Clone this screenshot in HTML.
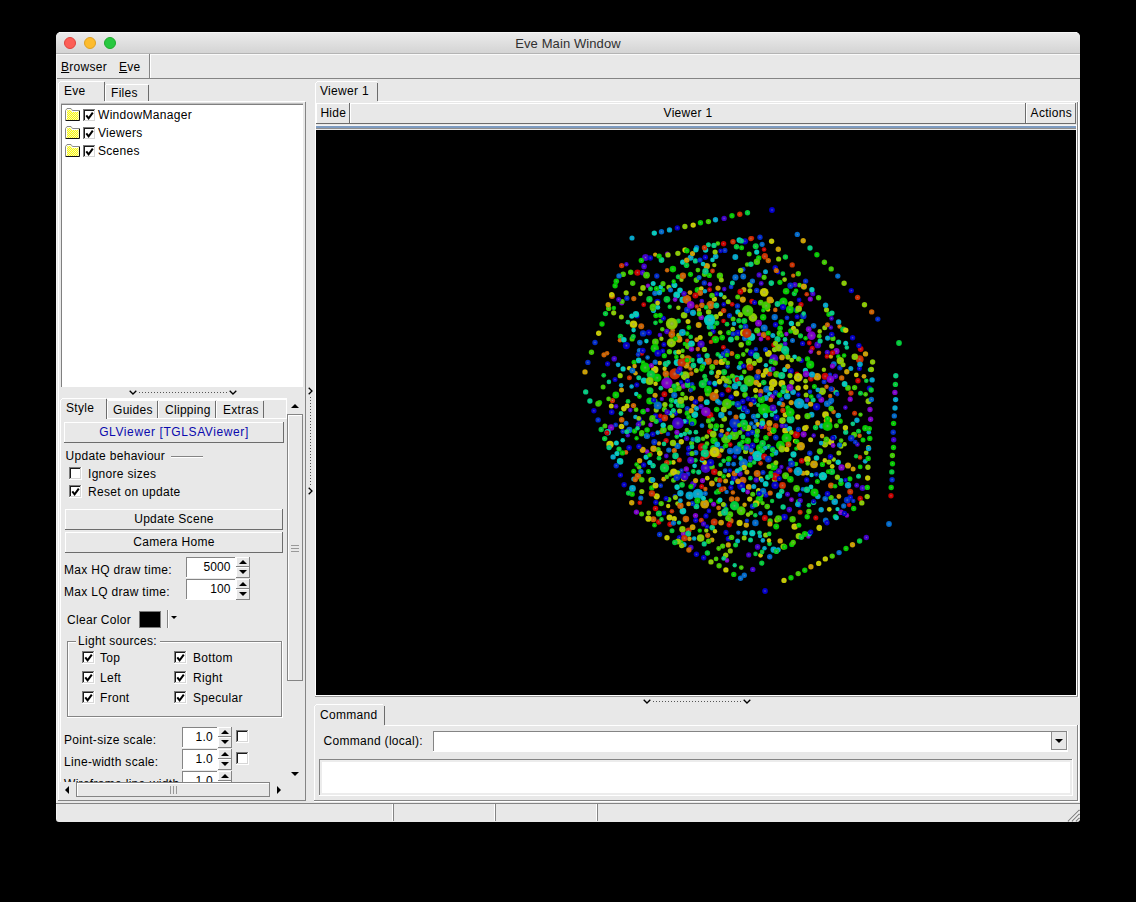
<!DOCTYPE html>
<html><head><meta charset="utf-8"><title>Eve Main Window</title>
<style>
html,body{margin:0;padding:0;background:#000;}
body{width:1136px;height:902px;position:relative;overflow:hidden;font-family:"Liberation Sans",sans-serif;font-size:12px;letter-spacing:0.3px;}
body div, body svg{position:absolute;}
u{text-decoration:underline;text-underline-offset:1px;}
</style></head><body>
<svg width="0" height="0" style="left:0;top:0"><defs><pattern id="dth" width="2" height="2" patternUnits="userSpaceOnUse"><rect width="2" height="2" fill="#f4f4c0"/><rect width="1" height="1" fill="#ffff00"/><rect x="1" y="1" width="1" height="1" fill="#ffff00"/></pattern></defs></svg>
<div style="left:56px;top:32px;width:1024px;height:790px;background:#e8e8e8;border-radius:5px 5px 3px 3px"></div>
<div style="left:56px;top:32px;width:1024px;height:22px;background:linear-gradient(#ececec,#d4d4d4);border-radius:5px 5px 0 0;border-bottom:1px solid #b4b4b4;box-sizing:border-box"></div>
<div style="left:59px;top:32px;width:1018px;height:1px;background:#f6f6f6"></div>
<div style="left:64px;top:37px;width:12px;height:12px;background:#fc5f57;border-radius:50%;border:0.5px solid #e0443e;box-sizing:border-box"></div>
<div style="left:84px;top:37px;width:12px;height:12px;background:#fdbc2e;border-radius:50%;border:0.5px solid #dea123;box-sizing:border-box"></div>
<div style="left:104px;top:37px;width:12px;height:12px;background:#28c840;border-radius:50%;border:0.5px solid #1eab2b;box-sizing:border-box"></div>
<div style="left:56px;top:36px;font-size:13px;line-height:15px;color:#303030;white-space:nowrap;letter-spacing:0.1px;width:1024px;text-align:center;">Eve Main Window</div>
<div style="left:61px;top:60px;font-size:12px;line-height:14px;color:#000;white-space:nowrap;"><u>B</u>rowser</div>
<div style="left:119px;top:60px;font-size:12px;line-height:14px;color:#000;white-space:nowrap;"><u>E</u>ve</div>
<div style="left:56px;top:54px;width:1024px;height:1px;background:#fafafa"></div>
<div style="left:149px;top:54px;width:1px;height:24px;background:#848484"></div>
<div style="left:150px;top:54px;width:1px;height:24px;background:#ffffff"></div>
<div style="left:56px;top:78px;width:1024px;height:1px;background:#848484"></div>
<div style="left:58px;top:83px;width:1px;height:718px;background:#ffffff"></div>
<div style="left:305px;top:102px;width:1px;height:699px;background:#848484"></div>
<div style="left:58px;top:800px;width:248px;height:1px;background:#848484"></div>
<div style="left:60px;top:81px;width:44px;height:1px;background:#ffffff"></div>
<div style="left:59px;top:82px;width:1px;height:1px;background:#fff"></div>
<div style="left:104px;top:82px;width:1px;height:19px;background:#6c6c6c"></div>
<div style="left:106px;top:84px;width:42px;height:1px;background:#ffffff"></div>
<div style="left:105px;top:85px;width:1px;height:16px;background:#ffffff"></div>
<div style="left:148px;top:85px;width:1px;height:16px;background:#6c6c6c"></div>
<div style="left:105px;top:101px;width:200px;height:1px;background:#ffffff"></div>
<div style="left:64px;top:84px;font-size:12px;line-height:14px;color:#000;white-space:nowrap;">Eve</div>
<div style="left:111px;top:86px;font-size:12px;line-height:14px;color:#000;white-space:nowrap;">Files</div>
<div style="left:61px;top:103px;width:242px;height:284px;background:#fff"></div>
<div style="left:61px;top:103px;width:242px;height:1px;background:#c0c0c0"></div>
<div style="left:61px;top:104px;width:242px;height:1px;background:#808080"></div>
<div style="left:61px;top:104px;width:1px;height:283px;background:#808080"></div>
<svg style="left:65px;top:108px" width="16" height="14" viewBox="0 0 16 14">
<path d="M1 12 V2.5 L2 1 H6 L7.5 3 H13.5 V12 Z" fill="url(#dth)"/>
<path d="M0.5 12 V2.5 L2 0.5 H6 L7.5 2.5 H14" stroke="#8a8a8a" stroke-width="1" fill="none"/>
<path d="M1.5 11.5 V3 L2.5 1.5 H5.6 L7 3.5 H13.4" stroke="#fff" stroke-width="1" fill="none"/>
<path d="M0.5 12.5 H14.5 V2.5" stroke="#111" stroke-width="1" fill="none"/>
</svg>
<div style="left:83px;top:109px;width:13px;height:13px;background:#fff"></div>
<div style="left:83px;top:109px;width:13px;height:1px;background:#7a7a7a"></div>
<div style="left:83px;top:109px;width:1px;height:13px;background:#7a7a7a"></div>
<div style="left:84px;top:110px;width:11px;height:1px;background:#1a1a1a"></div>
<div style="left:84px;top:110px;width:1px;height:11px;background:#1a1a1a"></div>
<div style="left:84px;top:120px;width:11px;height:1px;background:#d6d6d6"></div>
<div style="left:94px;top:110px;width:1px;height:11px;background:#d6d6d6"></div>
<div style="left:83px;top:121px;width:13px;height:1px;background:#fff"></div>
<div style="left:95px;top:109px;width:1px;height:13px;background:#fff"></div>
<svg style="left:83px;top:109px" width="12" height="12"><path d="M3.3 6.3 L5.6 9.3 L9.8 3.6" stroke="#000" stroke-width="2" fill="none"/></svg>
<div style="left:98px;top:108px;font-size:12px;line-height:14px;color:#000;white-space:nowrap;">WindowManager</div>
<svg style="left:65px;top:126px" width="16" height="14" viewBox="0 0 16 14">
<path d="M1 12 V2.5 L2 1 H6 L7.5 3 H13.5 V12 Z" fill="url(#dth)"/>
<path d="M0.5 12 V2.5 L2 0.5 H6 L7.5 2.5 H14" stroke="#8a8a8a" stroke-width="1" fill="none"/>
<path d="M1.5 11.5 V3 L2.5 1.5 H5.6 L7 3.5 H13.4" stroke="#fff" stroke-width="1" fill="none"/>
<path d="M0.5 12.5 H14.5 V2.5" stroke="#111" stroke-width="1" fill="none"/>
</svg>
<div style="left:83px;top:127px;width:13px;height:13px;background:#fff"></div>
<div style="left:83px;top:127px;width:13px;height:1px;background:#7a7a7a"></div>
<div style="left:83px;top:127px;width:1px;height:13px;background:#7a7a7a"></div>
<div style="left:84px;top:128px;width:11px;height:1px;background:#1a1a1a"></div>
<div style="left:84px;top:128px;width:1px;height:11px;background:#1a1a1a"></div>
<div style="left:84px;top:138px;width:11px;height:1px;background:#d6d6d6"></div>
<div style="left:94px;top:128px;width:1px;height:11px;background:#d6d6d6"></div>
<div style="left:83px;top:139px;width:13px;height:1px;background:#fff"></div>
<div style="left:95px;top:127px;width:1px;height:13px;background:#fff"></div>
<svg style="left:83px;top:127px" width="12" height="12"><path d="M3.3 6.3 L5.6 9.3 L9.8 3.6" stroke="#000" stroke-width="2" fill="none"/></svg>
<div style="left:98px;top:126px;font-size:12px;line-height:14px;color:#000;white-space:nowrap;">Viewers</div>
<svg style="left:65px;top:144px" width="16" height="14" viewBox="0 0 16 14">
<path d="M1 12 V2.5 L2 1 H6 L7.5 3 H13.5 V12 Z" fill="url(#dth)"/>
<path d="M0.5 12 V2.5 L2 0.5 H6 L7.5 2.5 H14" stroke="#8a8a8a" stroke-width="1" fill="none"/>
<path d="M1.5 11.5 V3 L2.5 1.5 H5.6 L7 3.5 H13.4" stroke="#fff" stroke-width="1" fill="none"/>
<path d="M0.5 12.5 H14.5 V2.5" stroke="#111" stroke-width="1" fill="none"/>
</svg>
<div style="left:83px;top:145px;width:13px;height:13px;background:#fff"></div>
<div style="left:83px;top:145px;width:13px;height:1px;background:#7a7a7a"></div>
<div style="left:83px;top:145px;width:1px;height:13px;background:#7a7a7a"></div>
<div style="left:84px;top:146px;width:11px;height:1px;background:#1a1a1a"></div>
<div style="left:84px;top:146px;width:1px;height:11px;background:#1a1a1a"></div>
<div style="left:84px;top:156px;width:11px;height:1px;background:#d6d6d6"></div>
<div style="left:94px;top:146px;width:1px;height:11px;background:#d6d6d6"></div>
<div style="left:83px;top:157px;width:13px;height:1px;background:#fff"></div>
<div style="left:95px;top:145px;width:1px;height:13px;background:#fff"></div>
<svg style="left:83px;top:145px" width="12" height="12"><path d="M3.3 6.3 L5.6 9.3 L9.8 3.6" stroke="#000" stroke-width="2" fill="none"/></svg>
<div style="left:98px;top:144px;font-size:12px;line-height:14px;color:#000;white-space:nowrap;">Scenes</div>
<svg style="left:128.5px;top:389.7px" width="8" height="5"><path d="M0.7 0.7 L4 4 L7.3 0.7" stroke="#000" stroke-width="1.3" fill="none"/></svg>
<svg style="left:228.5px;top:389.7px" width="8" height="5"><path d="M0.7 0.7 L4 4 L7.3 0.7" stroke="#000" stroke-width="1.3" fill="none"/></svg>
<div style="left:139px;top:392px;width:89px;height:1px;background:repeating-linear-gradient(90deg,#555 0 1px,transparent 1px 3px)"></div>
<div style="left:62px;top:398px;width:44px;height:1px;background:#ffffff"></div>
<div style="left:60px;top:400px;width:1px;height:382px;background:#ffffff"></div>
<div style="left:61px;top:399px;width:1px;height:1px;background:#fff"></div>
<div style="left:56px;top:55px;width:1px;height:764px;background:#f4f4f4"></div>
<div style="left:106px;top:399px;width:1px;height:20px;background:#6c6c6c"></div>
<div style="left:108px;top:400px;width:49px;height:1px;background:#ffffff"></div>
<div style="left:107px;top:401px;width:1px;height:17px;background:#ffffff"></div>
<div style="left:157px;top:401px;width:1px;height:17px;background:#6c6c6c"></div>
<div style="left:113px;top:403px;font-size:12px;line-height:14px;color:#000;white-space:nowrap;">Guides</div>
<div style="left:159px;top:400px;width:56px;height:1px;background:#ffffff"></div>
<div style="left:158px;top:401px;width:1px;height:17px;background:#ffffff"></div>
<div style="left:215px;top:401px;width:1px;height:17px;background:#6c6c6c"></div>
<div style="left:165px;top:403px;font-size:12px;line-height:14px;color:#000;white-space:nowrap;">Clipping</div>
<div style="left:217px;top:400px;width:46px;height:1px;background:#ffffff"></div>
<div style="left:216px;top:401px;width:1px;height:17px;background:#ffffff"></div>
<div style="left:263px;top:401px;width:1px;height:17px;background:#6c6c6c"></div>
<div style="left:223px;top:403px;font-size:12px;line-height:14px;color:#000;white-space:nowrap;">Extras</div>
<div style="left:107px;top:398px;width:180px;height:2px;background:#fff"></div>
<div style="left:286px;top:398px;width:1px;height:21px;background:#ffffff"></div>
<div style="left:107px;top:418px;width:180px;height:1px;background:#ffffff"></div>
<div style="left:66px;top:401px;font-size:12px;line-height:14px;color:#000;white-space:nowrap;">Style</div>
<svg style="left:290.5px;top:404.0px" width="8" height="4"><polygon points="0,4 4,0 8,4" fill="#000"/></svg>
<div style="left:287px;top:414px;width:16px;height:267px;background:#e8e8e8"></div>
<div style="left:287px;top:414px;width:16px;height:1px;background:#848484"></div>
<div style="left:287px;top:414px;width:1px;height:267px;background:#848484"></div>
<div style="left:287px;top:680px;width:16px;height:1px;background:#848484"></div>
<div style="left:302px;top:414px;width:1px;height:267px;background:#848484"></div>
<div style="left:288px;top:415px;width:1px;height:265px;background:#ffffff"></div>
<div style="left:288px;top:415px;width:14px;height:1px;background:#ffffff"></div>
<div style="left:291px;top:545px;width:8px;height:1px;background:#999"></div>
<div style="left:291px;top:548px;width:8px;height:1px;background:#999"></div>
<div style="left:291px;top:551px;width:8px;height:1px;background:#999"></div>
<svg style="left:290.5px;top:771.5px" width="8" height="4"><polygon points="0,0 4,4 8,0" fill="#000"/></svg>
<div style="left:64px;top:422px;width:220px;height:21px;background:#e8e8e8"></div>
<div style="left:64px;top:422px;width:220px;height:1px;background:#ffffff"></div>
<div style="left:64px;top:422px;width:1px;height:21px;background:#ffffff"></div>
<div style="left:64px;top:442px;width:220px;height:1px;background:#6c6c6c"></div>
<div style="left:283px;top:422px;width:1px;height:21px;background:#6c6c6c"></div>
<div style="left:64px;top:425px;font-size:12px;line-height:14px;color:#0a0aae;white-space:nowrap;letter-spacing:0.6px;width:220px;text-align:center;">GLViewer [TGLSAViewer]</div>
<div style="left:65.6px;top:449px;font-size:12px;line-height:14px;color:#000;white-space:nowrap;">Update behaviour</div>
<div style="left:171px;top:456px;width:32px;height:1px;background:#848484"></div>
<div style="left:171px;top:457px;width:32px;height:1px;background:#ffffff"></div>
<div style="left:69px;top:467px;width:13px;height:13px;background:#fff"></div>
<div style="left:69px;top:467px;width:13px;height:1px;background:#7a7a7a"></div>
<div style="left:69px;top:467px;width:1px;height:13px;background:#7a7a7a"></div>
<div style="left:70px;top:468px;width:11px;height:1px;background:#1a1a1a"></div>
<div style="left:70px;top:468px;width:1px;height:11px;background:#1a1a1a"></div>
<div style="left:70px;top:478px;width:11px;height:1px;background:#d6d6d6"></div>
<div style="left:80px;top:468px;width:1px;height:11px;background:#d6d6d6"></div>
<div style="left:69px;top:479px;width:13px;height:1px;background:#fff"></div>
<div style="left:81px;top:467px;width:1px;height:13px;background:#fff"></div>
<div style="left:88px;top:467px;font-size:12px;line-height:14px;color:#000;white-space:nowrap;">Ignore sizes</div>
<div style="left:69px;top:485px;width:13px;height:13px;background:#fff"></div>
<div style="left:69px;top:485px;width:13px;height:1px;background:#7a7a7a"></div>
<div style="left:69px;top:485px;width:1px;height:13px;background:#7a7a7a"></div>
<div style="left:70px;top:486px;width:11px;height:1px;background:#1a1a1a"></div>
<div style="left:70px;top:486px;width:1px;height:11px;background:#1a1a1a"></div>
<div style="left:70px;top:496px;width:11px;height:1px;background:#d6d6d6"></div>
<div style="left:80px;top:486px;width:1px;height:11px;background:#d6d6d6"></div>
<div style="left:69px;top:497px;width:13px;height:1px;background:#fff"></div>
<div style="left:81px;top:485px;width:1px;height:13px;background:#fff"></div>
<svg style="left:69px;top:485px" width="12" height="12"><path d="M3.3 6.3 L5.6 9.3 L9.8 3.6" stroke="#000" stroke-width="2" fill="none"/></svg>
<div style="left:88px;top:485px;font-size:12px;line-height:14px;color:#000;white-space:nowrap;">Reset on update</div>
<div style="left:65px;top:509px;width:218px;height:21px;background:#e8e8e8"></div>
<div style="left:65px;top:509px;width:218px;height:1px;background:#ffffff"></div>
<div style="left:65px;top:509px;width:1px;height:21px;background:#ffffff"></div>
<div style="left:65px;top:529px;width:218px;height:1px;background:#6c6c6c"></div>
<div style="left:282px;top:509px;width:1px;height:21px;background:#6c6c6c"></div>
<div style="left:65px;top:512px;font-size:12px;line-height:14px;color:#000;white-space:nowrap;width:218px;text-align:center;">Update Scene</div>
<div style="left:65px;top:532px;width:218px;height:21px;background:#e8e8e8"></div>
<div style="left:65px;top:532px;width:218px;height:1px;background:#ffffff"></div>
<div style="left:65px;top:532px;width:1px;height:21px;background:#ffffff"></div>
<div style="left:65px;top:552px;width:218px;height:1px;background:#6c6c6c"></div>
<div style="left:282px;top:532px;width:1px;height:21px;background:#6c6c6c"></div>
<div style="left:65px;top:535px;font-size:12px;line-height:14px;color:#000;white-space:nowrap;width:218px;text-align:center;">Camera Home</div>
<div style="left:64px;top:563px;font-size:12px;line-height:14px;color:#000;white-space:nowrap;">Max HQ draw time:</div>
<div style="left:186px;top:557px;width:50px;height:21px;background:#fff"></div>
<div style="left:186px;top:557px;width:50px;height:1px;background:#848484"></div>
<div style="left:186px;top:557px;width:1px;height:21px;background:#848484"></div>
<div style="left:186px;top:577px;width:50px;height:1px;background:#ffffff"></div>
<div style="left:235px;top:557px;width:1px;height:21px;background:#ffffff"></div>
<div style="left:187px;top:558px;width:48px;height:1px;background:#fff"></div>
<div style="left:236px;top:557px;width:14px;height:10px;background:#e8e8e8"></div>
<div style="left:236px;top:557px;width:14px;height:1px;background:#ffffff"></div>
<div style="left:236px;top:557px;width:1px;height:10px;background:#ffffff"></div>
<div style="left:236px;top:566px;width:14px;height:1px;background:#848484"></div>
<div style="left:249px;top:557px;width:1px;height:10px;background:#848484"></div>
<div style="left:236px;top:567px;width:14px;height:11px;background:#e8e8e8"></div>
<div style="left:236px;top:567px;width:14px;height:1px;background:#ffffff"></div>
<div style="left:236px;top:567px;width:1px;height:11px;background:#ffffff"></div>
<div style="left:236px;top:577px;width:14px;height:1px;background:#848484"></div>
<div style="left:249px;top:567px;width:1px;height:11px;background:#848484"></div>
<svg style="left:238.5px;top:560.2px" width="8" height="4"><polygon points="0,4 4,0 8,4" fill="#000"/></svg>
<svg style="left:238.5px;top:569.9px" width="8" height="4"><polygon points="0,0 4,4 8,0" fill="#000"/></svg>
<div style="left:186px;top:560px;font-size:12px;line-height:14px;color:#000;white-space:nowrap;letter-spacing:0.1px;width:44.5px;text-align:right;">5000</div>
<div style="left:64px;top:585px;font-size:12px;line-height:14px;color:#000;white-space:nowrap;">Max LQ draw time:</div>
<div style="left:186px;top:579px;width:50px;height:21px;background:#fff"></div>
<div style="left:186px;top:579px;width:50px;height:1px;background:#848484"></div>
<div style="left:186px;top:579px;width:1px;height:21px;background:#848484"></div>
<div style="left:186px;top:599px;width:50px;height:1px;background:#ffffff"></div>
<div style="left:235px;top:579px;width:1px;height:21px;background:#ffffff"></div>
<div style="left:187px;top:580px;width:48px;height:1px;background:#fff"></div>
<div style="left:236px;top:579px;width:14px;height:10px;background:#e8e8e8"></div>
<div style="left:236px;top:579px;width:14px;height:1px;background:#ffffff"></div>
<div style="left:236px;top:579px;width:1px;height:10px;background:#ffffff"></div>
<div style="left:236px;top:588px;width:14px;height:1px;background:#848484"></div>
<div style="left:249px;top:579px;width:1px;height:10px;background:#848484"></div>
<div style="left:236px;top:589px;width:14px;height:11px;background:#e8e8e8"></div>
<div style="left:236px;top:589px;width:14px;height:1px;background:#ffffff"></div>
<div style="left:236px;top:589px;width:1px;height:11px;background:#ffffff"></div>
<div style="left:236px;top:599px;width:14px;height:1px;background:#848484"></div>
<div style="left:249px;top:589px;width:1px;height:11px;background:#848484"></div>
<svg style="left:238.5px;top:582.2px" width="8" height="4"><polygon points="0,4 4,0 8,4" fill="#000"/></svg>
<svg style="left:238.5px;top:591.9px" width="8" height="4"><polygon points="0,0 4,4 8,0" fill="#000"/></svg>
<div style="left:186px;top:582px;font-size:12px;line-height:14px;color:#000;white-space:nowrap;letter-spacing:0.1px;width:44.5px;text-align:right;">100</div>
<div style="left:67px;top:613px;font-size:12px;line-height:14px;color:#000;white-space:nowrap;">Clear Color</div>
<div style="left:139px;top:611px;width:22px;height:17px;background:#000;border:1px solid #7a7a7a;box-sizing:border-box"></div>
<div style="left:167px;top:610px;width:1px;height:18px;background:#848484"></div>
<div style="left:168px;top:610px;width:1px;height:18px;background:#ffffff"></div>
<svg style="left:171px;top:615.7px" width="6" height="3"><polygon points="0,0 3,3 6,0" fill="#000"/></svg>
<div style="left:67px;top:641px;width:215px;height:1px;background:#848484"></div>
<div style="left:68px;top:642px;width:214px;height:1px;background:#ffffff"></div>
<div style="left:67px;top:641px;width:1px;height:76px;background:#848484"></div>
<div style="left:68px;top:642px;width:1px;height:75px;background:#ffffff"></div>
<div style="left:67px;top:716px;width:215px;height:1px;background:#848484"></div>
<div style="left:67px;top:717px;width:216px;height:1px;background:#ffffff"></div>
<div style="left:281px;top:641px;width:1px;height:76px;background:#848484"></div>
<div style="left:282px;top:641px;width:1px;height:77px;background:#ffffff"></div>
<div style="left:76px;top:636px;width:84px;height:12px;background:#e8e8e8"></div>
<div style="left:78px;top:634px;font-size:12px;line-height:14px;color:#000;white-space:nowrap;">Light sources:</div>
<div style="left:82px;top:651px;width:13px;height:13px;background:#fff"></div>
<div style="left:82px;top:651px;width:13px;height:1px;background:#7a7a7a"></div>
<div style="left:82px;top:651px;width:1px;height:13px;background:#7a7a7a"></div>
<div style="left:83px;top:652px;width:11px;height:1px;background:#1a1a1a"></div>
<div style="left:83px;top:652px;width:1px;height:11px;background:#1a1a1a"></div>
<div style="left:83px;top:662px;width:11px;height:1px;background:#d6d6d6"></div>
<div style="left:93px;top:652px;width:1px;height:11px;background:#d6d6d6"></div>
<div style="left:82px;top:663px;width:13px;height:1px;background:#fff"></div>
<div style="left:94px;top:651px;width:1px;height:13px;background:#fff"></div>
<svg style="left:82px;top:651px" width="12" height="12"><path d="M3.3 6.3 L5.6 9.3 L9.8 3.6" stroke="#000" stroke-width="2" fill="none"/></svg>
<div style="left:100px;top:651px;font-size:12px;line-height:14px;color:#000;white-space:nowrap;">Top</div>
<div style="left:174px;top:651px;width:13px;height:13px;background:#fff"></div>
<div style="left:174px;top:651px;width:13px;height:1px;background:#7a7a7a"></div>
<div style="left:174px;top:651px;width:1px;height:13px;background:#7a7a7a"></div>
<div style="left:175px;top:652px;width:11px;height:1px;background:#1a1a1a"></div>
<div style="left:175px;top:652px;width:1px;height:11px;background:#1a1a1a"></div>
<div style="left:175px;top:662px;width:11px;height:1px;background:#d6d6d6"></div>
<div style="left:185px;top:652px;width:1px;height:11px;background:#d6d6d6"></div>
<div style="left:174px;top:663px;width:13px;height:1px;background:#fff"></div>
<div style="left:186px;top:651px;width:1px;height:13px;background:#fff"></div>
<svg style="left:174px;top:651px" width="12" height="12"><path d="M3.3 6.3 L5.6 9.3 L9.8 3.6" stroke="#000" stroke-width="2" fill="none"/></svg>
<div style="left:193px;top:651px;font-size:12px;line-height:14px;color:#000;white-space:nowrap;">Bottom</div>
<div style="left:82px;top:671px;width:13px;height:13px;background:#fff"></div>
<div style="left:82px;top:671px;width:13px;height:1px;background:#7a7a7a"></div>
<div style="left:82px;top:671px;width:1px;height:13px;background:#7a7a7a"></div>
<div style="left:83px;top:672px;width:11px;height:1px;background:#1a1a1a"></div>
<div style="left:83px;top:672px;width:1px;height:11px;background:#1a1a1a"></div>
<div style="left:83px;top:682px;width:11px;height:1px;background:#d6d6d6"></div>
<div style="left:93px;top:672px;width:1px;height:11px;background:#d6d6d6"></div>
<div style="left:82px;top:683px;width:13px;height:1px;background:#fff"></div>
<div style="left:94px;top:671px;width:1px;height:13px;background:#fff"></div>
<svg style="left:82px;top:671px" width="12" height="12"><path d="M3.3 6.3 L5.6 9.3 L9.8 3.6" stroke="#000" stroke-width="2" fill="none"/></svg>
<div style="left:100px;top:671px;font-size:12px;line-height:14px;color:#000;white-space:nowrap;">Left</div>
<div style="left:174px;top:671px;width:13px;height:13px;background:#fff"></div>
<div style="left:174px;top:671px;width:13px;height:1px;background:#7a7a7a"></div>
<div style="left:174px;top:671px;width:1px;height:13px;background:#7a7a7a"></div>
<div style="left:175px;top:672px;width:11px;height:1px;background:#1a1a1a"></div>
<div style="left:175px;top:672px;width:1px;height:11px;background:#1a1a1a"></div>
<div style="left:175px;top:682px;width:11px;height:1px;background:#d6d6d6"></div>
<div style="left:185px;top:672px;width:1px;height:11px;background:#d6d6d6"></div>
<div style="left:174px;top:683px;width:13px;height:1px;background:#fff"></div>
<div style="left:186px;top:671px;width:1px;height:13px;background:#fff"></div>
<svg style="left:174px;top:671px" width="12" height="12"><path d="M3.3 6.3 L5.6 9.3 L9.8 3.6" stroke="#000" stroke-width="2" fill="none"/></svg>
<div style="left:193px;top:671px;font-size:12px;line-height:14px;color:#000;white-space:nowrap;">Right</div>
<div style="left:82px;top:691px;width:13px;height:13px;background:#fff"></div>
<div style="left:82px;top:691px;width:13px;height:1px;background:#7a7a7a"></div>
<div style="left:82px;top:691px;width:1px;height:13px;background:#7a7a7a"></div>
<div style="left:83px;top:692px;width:11px;height:1px;background:#1a1a1a"></div>
<div style="left:83px;top:692px;width:1px;height:11px;background:#1a1a1a"></div>
<div style="left:83px;top:702px;width:11px;height:1px;background:#d6d6d6"></div>
<div style="left:93px;top:692px;width:1px;height:11px;background:#d6d6d6"></div>
<div style="left:82px;top:703px;width:13px;height:1px;background:#fff"></div>
<div style="left:94px;top:691px;width:1px;height:13px;background:#fff"></div>
<svg style="left:82px;top:691px" width="12" height="12"><path d="M3.3 6.3 L5.6 9.3 L9.8 3.6" stroke="#000" stroke-width="2" fill="none"/></svg>
<div style="left:100px;top:691px;font-size:12px;line-height:14px;color:#000;white-space:nowrap;">Front</div>
<div style="left:174px;top:691px;width:13px;height:13px;background:#fff"></div>
<div style="left:174px;top:691px;width:13px;height:1px;background:#7a7a7a"></div>
<div style="left:174px;top:691px;width:1px;height:13px;background:#7a7a7a"></div>
<div style="left:175px;top:692px;width:11px;height:1px;background:#1a1a1a"></div>
<div style="left:175px;top:692px;width:1px;height:11px;background:#1a1a1a"></div>
<div style="left:175px;top:702px;width:11px;height:1px;background:#d6d6d6"></div>
<div style="left:185px;top:692px;width:1px;height:11px;background:#d6d6d6"></div>
<div style="left:174px;top:703px;width:13px;height:1px;background:#fff"></div>
<div style="left:186px;top:691px;width:1px;height:13px;background:#fff"></div>
<svg style="left:174px;top:691px" width="12" height="12"><path d="M3.3 6.3 L5.6 9.3 L9.8 3.6" stroke="#000" stroke-width="2" fill="none"/></svg>
<div style="left:193px;top:691px;font-size:12px;line-height:14px;color:#000;white-space:nowrap;">Specular</div>
<div style="left:64px;top:733px;font-size:12px;line-height:14px;color:#000;white-space:nowrap;">Point-size scale:</div>
<div style="left:182px;top:727px;width:36px;height:21px;background:#fff"></div>
<div style="left:182px;top:727px;width:36px;height:1px;background:#848484"></div>
<div style="left:182px;top:727px;width:1px;height:21px;background:#848484"></div>
<div style="left:182px;top:747px;width:36px;height:1px;background:#ffffff"></div>
<div style="left:217px;top:727px;width:1px;height:21px;background:#ffffff"></div>
<div style="left:183px;top:728px;width:34px;height:1px;background:#fff"></div>
<div style="left:218px;top:727px;width:14px;height:10px;background:#e8e8e8"></div>
<div style="left:218px;top:727px;width:14px;height:1px;background:#ffffff"></div>
<div style="left:218px;top:727px;width:1px;height:10px;background:#ffffff"></div>
<div style="left:218px;top:736px;width:14px;height:1px;background:#848484"></div>
<div style="left:231px;top:727px;width:1px;height:10px;background:#848484"></div>
<div style="left:218px;top:737px;width:14px;height:11px;background:#e8e8e8"></div>
<div style="left:218px;top:737px;width:14px;height:1px;background:#ffffff"></div>
<div style="left:218px;top:737px;width:1px;height:11px;background:#ffffff"></div>
<div style="left:218px;top:747px;width:14px;height:1px;background:#848484"></div>
<div style="left:231px;top:737px;width:1px;height:11px;background:#848484"></div>
<svg style="left:220.5px;top:730.2px" width="8" height="4"><polygon points="0,4 4,0 8,4" fill="#000"/></svg>
<svg style="left:220.5px;top:739.9px" width="8" height="4"><polygon points="0,0 4,4 8,0" fill="#000"/></svg>
<div style="left:182px;top:730px;font-size:12px;line-height:14px;color:#000;white-space:nowrap;width:31px;text-align:right;">1.0</div>
<div style="left:236px;top:730px;width:13px;height:13px;background:#fff"></div>
<div style="left:236px;top:730px;width:13px;height:1px;background:#7a7a7a"></div>
<div style="left:236px;top:730px;width:1px;height:13px;background:#7a7a7a"></div>
<div style="left:237px;top:731px;width:11px;height:1px;background:#1a1a1a"></div>
<div style="left:237px;top:731px;width:1px;height:11px;background:#1a1a1a"></div>
<div style="left:237px;top:741px;width:11px;height:1px;background:#d6d6d6"></div>
<div style="left:247px;top:731px;width:1px;height:11px;background:#d6d6d6"></div>
<div style="left:236px;top:742px;width:13px;height:1px;background:#fff"></div>
<div style="left:248px;top:730px;width:1px;height:13px;background:#fff"></div>
<div style="left:64px;top:755px;font-size:12px;line-height:14px;color:#000;white-space:nowrap;">Line-width scale:</div>
<div style="left:182px;top:749px;width:36px;height:21px;background:#fff"></div>
<div style="left:182px;top:749px;width:36px;height:1px;background:#848484"></div>
<div style="left:182px;top:749px;width:1px;height:21px;background:#848484"></div>
<div style="left:182px;top:769px;width:36px;height:1px;background:#ffffff"></div>
<div style="left:217px;top:749px;width:1px;height:21px;background:#ffffff"></div>
<div style="left:183px;top:750px;width:34px;height:1px;background:#fff"></div>
<div style="left:218px;top:749px;width:14px;height:10px;background:#e8e8e8"></div>
<div style="left:218px;top:749px;width:14px;height:1px;background:#ffffff"></div>
<div style="left:218px;top:749px;width:1px;height:10px;background:#ffffff"></div>
<div style="left:218px;top:758px;width:14px;height:1px;background:#848484"></div>
<div style="left:231px;top:749px;width:1px;height:10px;background:#848484"></div>
<div style="left:218px;top:759px;width:14px;height:11px;background:#e8e8e8"></div>
<div style="left:218px;top:759px;width:14px;height:1px;background:#ffffff"></div>
<div style="left:218px;top:759px;width:1px;height:11px;background:#ffffff"></div>
<div style="left:218px;top:769px;width:14px;height:1px;background:#848484"></div>
<div style="left:231px;top:759px;width:1px;height:11px;background:#848484"></div>
<svg style="left:220.5px;top:752.2px" width="8" height="4"><polygon points="0,4 4,0 8,4" fill="#000"/></svg>
<svg style="left:220.5px;top:761.9px" width="8" height="4"><polygon points="0,0 4,4 8,0" fill="#000"/></svg>
<div style="left:182px;top:752px;font-size:12px;line-height:14px;color:#000;white-space:nowrap;width:31px;text-align:right;">1.0</div>
<div style="left:236px;top:752px;width:13px;height:13px;background:#fff"></div>
<div style="left:236px;top:752px;width:13px;height:1px;background:#7a7a7a"></div>
<div style="left:236px;top:752px;width:1px;height:13px;background:#7a7a7a"></div>
<div style="left:237px;top:753px;width:11px;height:1px;background:#1a1a1a"></div>
<div style="left:237px;top:753px;width:1px;height:11px;background:#1a1a1a"></div>
<div style="left:237px;top:763px;width:11px;height:1px;background:#d6d6d6"></div>
<div style="left:247px;top:753px;width:1px;height:11px;background:#d6d6d6"></div>
<div style="left:236px;top:764px;width:13px;height:1px;background:#fff"></div>
<div style="left:248px;top:752px;width:1px;height:13px;background:#fff"></div>
<div style="left:60px;top:771px;width:226px;height:11px;overflow:hidden;position:absolute">
<div style="left:4px;top:6px;font-size:12px;line-height:14px;color:#000;white-space:nowrap;">Wireframe line-width</div>
<div style="left:122px;top:0px;width:36px;height:21px;background:#fff"></div>
<div style="left:122px;top:0px;width:36px;height:1px;background:#848484"></div>
<div style="left:122px;top:0px;width:1px;height:21px;background:#848484"></div>
<div style="left:122px;top:20px;width:36px;height:1px;background:#ffffff"></div>
<div style="left:157px;top:0px;width:1px;height:21px;background:#ffffff"></div>
<div style="left:123px;top:1px;width:34px;height:1px;background:#fff"></div>
<div style="left:158px;top:0px;width:14px;height:10px;background:#e8e8e8"></div>
<div style="left:158px;top:0px;width:14px;height:1px;background:#ffffff"></div>
<div style="left:158px;top:0px;width:1px;height:10px;background:#ffffff"></div>
<div style="left:158px;top:9px;width:14px;height:1px;background:#848484"></div>
<div style="left:171px;top:0px;width:1px;height:10px;background:#848484"></div>
<div style="left:158px;top:10px;width:14px;height:11px;background:#e8e8e8"></div>
<div style="left:158px;top:10px;width:14px;height:1px;background:#ffffff"></div>
<div style="left:158px;top:10px;width:1px;height:11px;background:#ffffff"></div>
<div style="left:158px;top:20px;width:14px;height:1px;background:#848484"></div>
<div style="left:171px;top:10px;width:1px;height:11px;background:#848484"></div>
<svg style="left:160.5px;top:3.2px" width="8" height="4"><polygon points="0,4 4,0 8,4" fill="#000"/></svg>
<svg style="left:160.5px;top:12.9px" width="8" height="4"><polygon points="0,0 4,4 8,0" fill="#000"/></svg>
<div style="left:122px;top:3px;font-size:12px;line-height:14px;color:#000;white-space:nowrap;width:31px;text-align:right;">1.0</div>
</div>
<svg style="left:64.6px;top:785.5px" width="4" height="8"><polygon points="4,0 0,4 4,8" fill="#000"/></svg>
<div style="left:76px;top:782px;width:194px;height:15px;background:#e8e8e8"></div>
<div style="left:76px;top:782px;width:194px;height:1px;background:#848484"></div>
<div style="left:76px;top:782px;width:1px;height:15px;background:#848484"></div>
<div style="left:76px;top:796px;width:194px;height:1px;background:#848484"></div>
<div style="left:269px;top:782px;width:1px;height:15px;background:#848484"></div>
<div style="left:77px;top:783px;width:192px;height:1px;background:#ffffff"></div>
<div style="left:77px;top:783px;width:1px;height:13px;background:#ffffff"></div>
<div style="left:170px;top:786px;width:1px;height:8px;background:#999"></div>
<div style="left:173px;top:786px;width:1px;height:8px;background:#999"></div>
<div style="left:176px;top:786px;width:1px;height:8px;background:#999"></div>
<svg style="left:276.5px;top:785.5px" width="4" height="8"><polygon points="0,0 4,4 0,8" fill="#000"/></svg>
<svg style="left:307.5px;top:387.3px" width="5" height="8"><path d="M0.7 0.7 L4 4 L0.7 7.3" stroke="#000" stroke-width="1.3" fill="none"/></svg>
<svg style="left:307.5px;top:487.4px" width="5" height="8"><path d="M0.7 0.7 L4 4 L0.7 7.3" stroke="#000" stroke-width="1.3" fill="none"/></svg>
<div style="left:310px;top:397px;width:1px;height:89px;background:repeating-linear-gradient(180deg,#555 0 1px,transparent 1px 3px)"></div>
<div style="left:317px;top:81px;width:60px;height:1px;background:#ffffff"></div>
<div style="left:315px;top:83px;width:1px;height:19px;background:#ffffff"></div>
<div style="left:316px;top:82px;width:1px;height:1px;background:#fff"></div>
<div style="left:377px;top:83px;width:1px;height:18px;background:#6c6c6c"></div>
<div style="left:378px;top:101px;width:700px;height:1px;background:#ffffff"></div>
<div style="left:315px;top:102px;width:1px;height:594px;background:#ffffff"></div>
<div style="left:320px;top:84px;font-size:12px;line-height:14px;color:#000;white-space:nowrap;">Viewer 1</div>
<div style="left:316px;top:103px;width:34px;height:21px;background:#e8e8e8"></div>
<div style="left:316px;top:103px;width:34px;height:1px;background:#ffffff"></div>
<div style="left:316px;top:103px;width:1px;height:21px;background:#ffffff"></div>
<div style="left:316px;top:123px;width:34px;height:1px;background:#6c6c6c"></div>
<div style="left:349px;top:103px;width:1px;height:21px;background:#6c6c6c"></div>
<div style="left:320.4px;top:106px;font-size:12px;line-height:14px;color:#000;white-space:nowrap;">Hide</div>
<div style="left:350px;top:103px;width:676px;height:21px;background:#e8e8e8"></div>
<div style="left:350px;top:103px;width:676px;height:1px;background:#ffffff"></div>
<div style="left:350px;top:103px;width:1px;height:21px;background:#ffffff"></div>
<div style="left:350px;top:123px;width:676px;height:1px;background:#6c6c6c"></div>
<div style="left:1025px;top:103px;width:1px;height:21px;background:#6c6c6c"></div>
<div style="left:350px;top:106px;font-size:12px;line-height:14px;color:#000;white-space:nowrap;width:676px;text-align:center;">Viewer 1</div>
<div style="left:1026px;top:103px;width:50px;height:21px;background:#e8e8e8"></div>
<div style="left:1026px;top:103px;width:50px;height:1px;background:#ffffff"></div>
<div style="left:1026px;top:103px;width:1px;height:21px;background:#ffffff"></div>
<div style="left:1026px;top:123px;width:50px;height:1px;background:#6c6c6c"></div>
<div style="left:1075px;top:103px;width:1px;height:21px;background:#6c6c6c"></div>
<div style="left:1030.6px;top:106px;font-size:12px;line-height:14px;color:#000;white-space:nowrap;">Actions</div>
<div style="left:316px;top:125px;width:760px;height:4px;background:#f4f4f4"></div>
<div style="left:316px;top:126px;width:760px;height:2px;background:#7d9bc1"></div>
<div style="left:316px;top:128px;width:760px;height:1px;background:#8e8e8e"></div>
<div style="left:316px;top:130px;width:760px;height:565px;background:#000"></div>
<div style="left:1076px;top:125px;width:1px;height:571px;background:#ffffff"></div>
<div style="left:1077px;top:102px;width:1px;height:595px;background:#848484"></div>
<div style="left:1078px;top:102px;width:1px;height:596px;background:#ffffff"></div>
<div style="left:316px;top:695px;width:761px;height:1px;background:#ffffff"></div>
<div style="left:315px;top:696px;width:763px;height:1px;background:#9a9a9a"></div>
<svg style="left:642.6px;top:698.5px" width="8" height="5"><path d="M0.7 0.7 L4 4 L7.3 0.7" stroke="#000" stroke-width="1.3" fill="none"/></svg>
<svg style="left:742.6px;top:698.5px" width="8" height="5"><path d="M0.7 0.7 L4 4 L7.3 0.7" stroke="#000" stroke-width="1.3" fill="none"/></svg>
<div style="left:653px;top:701px;width:89px;height:1px;background:repeating-linear-gradient(90deg,#555 0 1px,transparent 1px 3px)"></div>
<div style="left:316px;top:704px;width:67px;height:1px;background:#ffffff"></div>
<div style="left:314px;top:706px;width:1px;height:95px;background:#ffffff"></div>
<div style="left:315px;top:705px;width:1px;height:1px;background:#fff"></div>
<div style="left:384px;top:706px;width:1px;height:19px;background:#6c6c6c"></div>
<div style="left:385px;top:725px;width:693px;height:1px;background:#ffffff"></div>
<div style="left:320px;top:708px;font-size:12px;line-height:14px;color:#000;white-space:nowrap;">Command</div>
<div style="left:323.5px;top:734px;font-size:12px;line-height:14px;color:#000;white-space:nowrap;">Command (local):</div>
<div style="left:433px;top:731px;width:635px;height:21px;background:#fff"></div>
<div style="left:433px;top:731px;width:635px;height:1px;background:#848484"></div>
<div style="left:433px;top:731px;width:1px;height:21px;background:#848484"></div>
<div style="left:433px;top:751px;width:635px;height:1px;background:#ffffff"></div>
<div style="left:1067px;top:731px;width:1px;height:21px;background:#ffffff"></div>
<div style="left:1051px;top:732px;width:16px;height:18px;background:#e8e8e8;border:1px solid #8c8c8c;border-top:none;box-sizing:border-box"></div>
<svg style="left:1055px;top:738.5px" width="8" height="4"><polygon points="0,0 4,4 8,0" fill="#000"/></svg>
<div style="left:319px;top:759px;width:754px;height:37px;background:#fff"></div>
<div style="left:319px;top:759px;width:754px;height:1px;background:#848484"></div>
<div style="left:319px;top:759px;width:1px;height:37px;background:#848484"></div>
<div style="left:319px;top:795px;width:754px;height:1px;background:#ffffff"></div>
<div style="left:1072px;top:759px;width:1px;height:37px;background:#ffffff"></div>
<div style="left:320px;top:760px;width:752px;height:35px;border:2px solid #ececec;box-sizing:border-box"></div>
<div style="left:1077px;top:725px;width:1px;height:76px;background:#848484"></div>
<div style="left:1078px;top:725px;width:1px;height:77px;background:#ffffff"></div>
<div style="left:314px;top:800px;width:764px;height:1px;background:#848484"></div>
<div style="left:314px;top:801px;width:765px;height:1px;background:#ffffff"></div>
<div style="left:56px;top:803px;width:1024px;height:1px;background:#848484"></div>
<div style="left:392px;top:804px;width:1px;height:17px;background:#ffffff"></div>
<div style="left:393px;top:804px;width:1px;height:17px;background:#848484"></div>
<div style="left:494px;top:804px;width:1px;height:17px;background:#ffffff"></div>
<div style="left:495px;top:804px;width:1px;height:17px;background:#848484"></div>
<div style="left:596px;top:804px;width:1px;height:17px;background:#ffffff"></div>
<div style="left:597px;top:804px;width:1px;height:17px;background:#848484"></div>
<svg style="left:1067px;top:809px" width="13" height="13"><path d="M12.5 1 L1 12.5 M12.5 5 L5 12.5 M12.5 9 L9 12.5" stroke="#777" stroke-width="1.2"/><path d="M12.5 2 L2 12.5 M12.5 6 L6 12.5 M12.5 10 L10 12.5" stroke="#fff" stroke-width="1"/></svg>
<svg style="left:316px;top:130px" width="760" height="565"><defs><radialGradient id="g0" cx="0.5" cy="0.5" r="0.5"><stop offset="0" stop-color="#b26262"/><stop offset="0.3" stop-color="#bc1c1c"/><stop offset="0.55" stop-color="#d10000"/><stop offset="1" stop-color="#bc0000"/></radialGradient><radialGradient id="g1" cx="0.5" cy="0.5" r="0.5"><stop offset="0" stop-color="#b27562"/><stop offset="0.3" stop-color="#bc421c"/><stop offset="0.55" stop-color="#d13200"/><stop offset="1" stop-color="#bc2d00"/></radialGradient><radialGradient id="g2" cx="0.5" cy="0.5" r="0.5"><stop offset="0" stop-color="#b28862"/><stop offset="0.3" stop-color="#bc691c"/><stop offset="0.55" stop-color="#d16400"/><stop offset="1" stop-color="#bc5a00"/></radialGradient><radialGradient id="g3" cx="0.5" cy="0.5" r="0.5"><stop offset="0" stop-color="#b2a062"/><stop offset="0.3" stop-color="#bc991c"/><stop offset="0.55" stop-color="#d1a300"/><stop offset="1" stop-color="#bc9300"/></radialGradient><radialGradient id="g4" cx="0.5" cy="0.5" r="0.5"><stop offset="0" stop-color="#b0b262"/><stop offset="0.3" stop-color="#b9bc1c"/><stop offset="0.55" stop-color="#ccd100"/><stop offset="1" stop-color="#b8bc00"/></radialGradient><radialGradient id="g5" cx="0.5" cy="0.5" r="0.5"><stop offset="0" stop-color="#98b262"/><stop offset="0.3" stop-color="#89bc1c"/><stop offset="0.55" stop-color="#8ed100"/><stop offset="1" stop-color="#80bc00"/></radialGradient><radialGradient id="g6" cx="0.5" cy="0.5" r="0.5"><stop offset="0" stop-color="#7bb262"/><stop offset="0.3" stop-color="#4fbc1c"/><stop offset="0.55" stop-color="#42d100"/><stop offset="1" stop-color="#3cbc00"/></radialGradient><radialGradient id="g7" cx="0.5" cy="0.5" r="0.5"><stop offset="0" stop-color="#63b262"/><stop offset="0.3" stop-color="#1fbc1c"/><stop offset="0.55" stop-color="#04d100"/><stop offset="1" stop-color="#03bc00"/></radialGradient><radialGradient id="g8" cx="0.5" cy="0.5" r="0.5"><stop offset="0" stop-color="#62b278"/><stop offset="0.3" stop-color="#1cbc49"/><stop offset="0.55" stop-color="#00d13a"/><stop offset="1" stop-color="#00bc34"/></radialGradient><radialGradient id="g9" cx="0.5" cy="0.5" r="0.5"><stop offset="0" stop-color="#62b295"/><stop offset="0.3" stop-color="#1cbc82"/><stop offset="0.55" stop-color="#00d185"/><stop offset="1" stop-color="#00bc78"/></radialGradient><radialGradient id="g10" cx="0.5" cy="0.5" r="0.5"><stop offset="0" stop-color="#62b2ad"/><stop offset="0.3" stop-color="#1cbcb3"/><stop offset="0.55" stop-color="#00d1c4"/><stop offset="1" stop-color="#00bcb1"/></radialGradient><radialGradient id="g11" cx="0.5" cy="0.5" r="0.5"><stop offset="0" stop-color="#62a4b2"/><stop offset="0.3" stop-color="#1c9fbc"/><stop offset="0.55" stop-color="#00abd1"/><stop offset="1" stop-color="#009abc"/></radialGradient><radialGradient id="g12" cx="0.5" cy="0.5" r="0.5"><stop offset="0" stop-color="#628bb2"/><stop offset="0.3" stop-color="#1c6fbc"/><stop offset="0.55" stop-color="#006cd1"/><stop offset="1" stop-color="#0062bc"/></radialGradient><radialGradient id="g13" cx="0.5" cy="0.5" r="0.5"><stop offset="0" stop-color="#6273b2"/><stop offset="0.3" stop-color="#1c3fbc"/><stop offset="0.55" stop-color="#002ed1"/><stop offset="1" stop-color="#0029bc"/></radialGradient><radialGradient id="g14" cx="0.5" cy="0.5" r="0.5"><stop offset="0" stop-color="#6362b2"/><stop offset="0.3" stop-color="#1f1cbc"/><stop offset="0.55" stop-color="#0400d1"/><stop offset="1" stop-color="#0300bc"/></radialGradient><radialGradient id="g15" cx="0.5" cy="0.5" r="0.5"><stop offset="0" stop-color="#7b62b2"/><stop offset="0.3" stop-color="#4f1cbc"/><stop offset="0.55" stop-color="#4200d1"/><stop offset="1" stop-color="#3c00bc"/></radialGradient><radialGradient id="g16" cx="0.5" cy="0.5" r="0.5"><stop offset="0" stop-color="#9362b2"/><stop offset="0.3" stop-color="#7f1cbc"/><stop offset="0.55" stop-color="#8100d1"/><stop offset="1" stop-color="#7400bc"/></radialGradient></defs><circle cx="399.7" cy="298.7" r="2.5" fill="url(#g9)"/><circle cx="406.7" cy="318.0" r="2.3" fill="url(#g8)"/><circle cx="506.9" cy="346.2" r="4.2" fill="url(#g10)"/><circle cx="485.7" cy="330.8" r="2.8" fill="url(#g0)"/><circle cx="321.1" cy="185.9" r="2.5" fill="url(#g14)"/><circle cx="386.0" cy="295.7" r="2.4" fill="url(#g12)"/><circle cx="332.9" cy="202.6" r="3.0" fill="url(#g14)"/><circle cx="351.3" cy="123.7" r="2.3" fill="url(#g16)"/><circle cx="497.6" cy="195.8" r="2.8" fill="url(#g12)"/><circle cx="403.5" cy="272.8" r="2.5" fill="url(#g12)"/><circle cx="494.9" cy="248.8" r="2.8" fill="url(#g0)"/><circle cx="362.7" cy="205.2" r="2.5" fill="url(#g5)"/><circle cx="379.8" cy="322.7" r="2.6" fill="url(#g12)"/><circle cx="528.7" cy="314.3" r="2.2" fill="url(#g5)"/><circle cx="335.5" cy="350.1" r="3.2" fill="url(#g5)"/><circle cx="448.8" cy="126.3" r="3.2" fill="url(#g1)"/><circle cx="344.8" cy="258.2" r="2.4" fill="url(#g9)"/><circle cx="305.5" cy="259.9" r="2.5" fill="url(#g3)"/><circle cx="371.2" cy="210.7" r="2.2" fill="url(#g1)"/><circle cx="435.8" cy="321.9" r="2.6" fill="url(#g2)"/><circle cx="341.2" cy="247.8" r="4.3" fill="url(#g7)"/><circle cx="396.2" cy="397.6" r="2.8" fill="url(#g9)"/><circle cx="498.0" cy="334.3" r="3.9" fill="url(#g3)"/><circle cx="467.4" cy="171.9" r="4.3" fill="url(#g7)"/><circle cx="413.5" cy="185.7" r="2.6" fill="url(#g13)"/><circle cx="347.0" cy="160.0" r="2.3" fill="url(#g7)"/><circle cx="378.8" cy="284.6" r="3.4" fill="url(#g10)"/><circle cx="399.7" cy="126.5" r="2.8" fill="url(#g11)"/><circle cx="348.3" cy="225.7" r="2.6" fill="url(#g7)"/><circle cx="512.9" cy="184.3" r="2.6" fill="url(#g7)"/><circle cx="374.6" cy="127.7" r="3.0" fill="url(#g11)"/><circle cx="478.3" cy="163.6" r="2.6" fill="url(#g8)"/><circle cx="473.9" cy="179.5" r="4.0" fill="url(#g7)"/><circle cx="400.1" cy="322.1" r="2.5" fill="url(#g15)"/><circle cx="414.8" cy="390.9" r="2.8" fill="url(#g2)"/><circle cx="425.1" cy="380.7" r="4.5" fill="url(#g6)"/><circle cx="423.9" cy="343.7" r="2.8" fill="url(#g15)"/><circle cx="422.0" cy="203.0" r="3.2" fill="url(#g14)"/><circle cx="525.0" cy="316.3" r="2.5" fill="url(#g5)"/><circle cx="435.9" cy="171.3" r="2.6" fill="url(#g0)"/><circle cx="385.2" cy="187.4" r="2.7" fill="url(#g16)"/><circle cx="534.2" cy="269.2" r="2.6" fill="url(#g16)"/><circle cx="481.1" cy="186.8" r="2.5" fill="url(#g14)"/><circle cx="417.1" cy="188.9" r="2.5" fill="url(#g6)"/><circle cx="452.4" cy="223.4" r="3.4" fill="url(#g4)"/><circle cx="335.8" cy="357.9" r="2.7" fill="url(#g7)"/><circle cx="427.0" cy="350.2" r="3.4" fill="url(#g2)"/><circle cx="415.7" cy="369.1" r="2.9" fill="url(#g2)"/><circle cx="408.4" cy="167.3" r="2.3" fill="url(#g5)"/><circle cx="402.6" cy="371.5" r="2.5" fill="url(#g7)"/><circle cx="327.0" cy="232.5" r="2.3" fill="url(#g7)"/><circle cx="400.2" cy="362.5" r="2.3" fill="url(#g8)"/><circle cx="501.7" cy="214.9" r="3.4" fill="url(#g15)"/><circle cx="452.8" cy="243.6" r="2.8" fill="url(#g13)"/><circle cx="492.7" cy="199.2" r="2.9" fill="url(#g16)"/><circle cx="385.7" cy="356.5" r="2.5" fill="url(#g0)"/><circle cx="353.7" cy="176.7" r="2.2" fill="url(#g8)"/><circle cx="485.6" cy="191.1" r="2.3" fill="url(#g6)"/><circle cx="346.7" cy="221.0" r="2.5" fill="url(#g14)"/><circle cx="443.3" cy="369.5" r="3.7" fill="url(#g7)"/><circle cx="426.6" cy="311.8" r="2.4" fill="url(#g7)"/><circle cx="443.3" cy="229.8" r="3.2" fill="url(#g5)"/><circle cx="463.1" cy="365.5" r="3.2" fill="url(#g10)"/><circle cx="509.0" cy="314.3" r="3.1" fill="url(#g4)"/><circle cx="522.3" cy="226.6" r="2.3" fill="url(#g7)"/><circle cx="400.7" cy="193.1" r="2.7" fill="url(#g8)"/><circle cx="414.9" cy="209.6" r="3.0" fill="url(#g9)"/><circle cx="469.5" cy="300.5" r="3.3" fill="url(#g4)"/><circle cx="409.2" cy="225.7" r="2.3" fill="url(#g14)"/><circle cx="327.9" cy="250.6" r="3.1" fill="url(#g10)"/><circle cx="514.9" cy="311.8" r="3.3" fill="url(#g4)"/><circle cx="392.3" cy="231.1" r="3.6" fill="url(#g2)"/><circle cx="393.6" cy="301.6" r="2.7" fill="url(#g0)"/><circle cx="462.6" cy="129.0" r="2.6" fill="url(#g5)"/><circle cx="461.2" cy="216.1" r="2.5" fill="url(#g9)"/><circle cx="355.4" cy="212.8" r="4.6" fill="url(#g5)"/><circle cx="374.5" cy="238.5" r="2.3" fill="url(#g2)"/><circle cx="418.7" cy="293.2" r="5.5" fill="url(#g13)"/><circle cx="390.8" cy="306.6" r="2.4" fill="url(#g5)"/><circle cx="458.7" cy="187.1" r="3.2" fill="url(#g12)"/><circle cx="401.7" cy="224.4" r="2.3" fill="url(#g8)"/><circle cx="425.2" cy="355.9" r="4.0" fill="url(#g14)"/><circle cx="469.2" cy="213.9" r="2.4" fill="url(#g15)"/><circle cx="496.8" cy="163.7" r="2.6" fill="url(#g15)"/><circle cx="504.1" cy="211.0" r="2.6" fill="url(#g9)"/><circle cx="479.2" cy="311.1" r="2.4" fill="url(#g4)"/><circle cx="429.1" cy="403.0" r="2.8" fill="url(#g10)"/><circle cx="405.8" cy="231.9" r="3.2" fill="url(#g4)"/><circle cx="388.7" cy="374.0" r="4.5" fill="url(#g3)"/><circle cx="344.0" cy="289.8" r="2.8" fill="url(#g14)"/><circle cx="427.0" cy="279.6" r="2.3" fill="url(#g11)"/><circle cx="326.5" cy="292.9" r="2.7" fill="url(#g6)"/><circle cx="358.8" cy="243.9" r="5.6" fill="url(#g1)"/><circle cx="371.9" cy="343.9" r="2.5" fill="url(#g13)"/><circle cx="512.9" cy="332.1" r="2.6" fill="url(#g5)"/><circle cx="490.5" cy="297.2" r="2.4" fill="url(#g3)"/><circle cx="432.8" cy="356.9" r="2.9" fill="url(#g3)"/><circle cx="317.8" cy="168.6" r="2.6" fill="url(#g2)"/><circle cx="332.0" cy="155.8" r="2.2" fill="url(#g16)"/><circle cx="305.7" cy="172.9" r="2.5" fill="url(#g16)"/><circle cx="459.2" cy="137.7" r="2.7" fill="url(#g14)"/><circle cx="340.2" cy="291.3" r="2.6" fill="url(#g8)"/><circle cx="478.6" cy="396.6" r="3.2" fill="url(#g4)"/><circle cx="407.4" cy="248.2" r="2.7" fill="url(#g5)"/><circle cx="427.0" cy="299.1" r="2.7" fill="url(#g15)"/><circle cx="509.3" cy="313.5" r="3.0" fill="url(#g5)"/><circle cx="491.5" cy="228.9" r="2.7" fill="url(#g7)"/><circle cx="461.5" cy="209.2" r="3.1" fill="url(#g9)"/><circle cx="456.1" cy="371.0" r="2.2" fill="url(#g8)"/><circle cx="379.9" cy="302.2" r="2.4" fill="url(#g9)"/><circle cx="385.0" cy="276.6" r="2.7" fill="url(#g15)"/><circle cx="386.7" cy="254.1" r="4.1" fill="url(#g8)"/><circle cx="420.2" cy="249.2" r="3.9" fill="url(#g9)"/><circle cx="489.6" cy="208.2" r="2.3" fill="url(#g7)"/><circle cx="427.5" cy="333.2" r="4.7" fill="url(#g12)"/><circle cx="425.3" cy="437.6" r="2.4" fill="url(#g6)"/><circle cx="315.6" cy="256.5" r="2.3" fill="url(#g11)"/><circle cx="439.7" cy="116.3" r="3.0" fill="url(#g8)"/><circle cx="473.4" cy="298.7" r="2.8" fill="url(#g10)"/><circle cx="524.9" cy="353.2" r="2.8" fill="url(#g7)"/><circle cx="344.7" cy="355.7" r="2.4" fill="url(#g13)"/><circle cx="464.1" cy="198.3" r="2.8" fill="url(#g7)"/><circle cx="440.0" cy="290.7" r="2.3" fill="url(#g12)"/><circle cx="360.2" cy="271.6" r="2.7" fill="url(#g10)"/><circle cx="469.3" cy="284.8" r="2.7" fill="url(#g4)"/><circle cx="428.3" cy="190.9" r="3.0" fill="url(#g8)"/><circle cx="330.4" cy="305.9" r="2.6" fill="url(#g11)"/><circle cx="361.5" cy="315.9" r="3.2" fill="url(#g12)"/><circle cx="342.9" cy="383.5" r="3.1" fill="url(#g8)"/><circle cx="437.8" cy="356.4" r="2.5" fill="url(#g11)"/><circle cx="358.3" cy="320.5" r="2.6" fill="url(#g2)"/><circle cx="459.0" cy="281.2" r="2.5" fill="url(#g10)"/><circle cx="513.3" cy="379.3" r="2.4" fill="url(#g4)"/><circle cx="447.7" cy="205.0" r="3.1" fill="url(#g2)"/><circle cx="543.7" cy="229.2" r="3.9" fill="url(#g1)"/><circle cx="408.1" cy="242.1" r="3.1" fill="url(#g8)"/><circle cx="372.8" cy="197.5" r="2.4" fill="url(#g7)"/><circle cx="434.2" cy="330.6" r="2.2" fill="url(#g12)"/><circle cx="361.6" cy="373.6" r="2.4" fill="url(#g5)"/><circle cx="407.6" cy="346.4" r="2.4" fill="url(#g7)"/><circle cx="463.9" cy="152.3" r="2.6" fill="url(#g7)"/><circle cx="305.0" cy="283.5" r="2.4" fill="url(#g9)"/><circle cx="334.4" cy="324.5" r="2.4" fill="url(#g1)"/><circle cx="411.0" cy="430.4" r="2.3" fill="url(#g16)"/><circle cx="384.7" cy="268.7" r="3.0" fill="url(#g2)"/><circle cx="505.3" cy="269.8" r="3.0" fill="url(#g16)"/><circle cx="439.8" cy="266.5" r="2.2" fill="url(#g6)"/><circle cx="361.1" cy="232.5" r="3.4" fill="url(#g10)"/><circle cx="404.8" cy="318.4" r="2.5" fill="url(#g13)"/><circle cx="426.9" cy="317.5" r="2.5" fill="url(#g7)"/><circle cx="332.5" cy="341.5" r="2.5" fill="url(#g7)"/><circle cx="518.7" cy="371.7" r="3.3" fill="url(#g11)"/><circle cx="368.0" cy="414.6" r="2.6" fill="url(#g11)"/><circle cx="310.9" cy="168.2" r="2.6" fill="url(#g13)"/><circle cx="433.1" cy="231.2" r="3.2" fill="url(#g5)"/><circle cx="457.9" cy="228.6" r="4.4" fill="url(#g15)"/><circle cx="340.2" cy="280.1" r="2.6" fill="url(#g5)"/><circle cx="344.7" cy="157.1" r="2.4" fill="url(#g10)"/><circle cx="389.8" cy="324.2" r="4.7" fill="url(#g1)"/><circle cx="370.9" cy="291.2" r="2.7" fill="url(#g14)"/><circle cx="426.8" cy="271.5" r="2.7" fill="url(#g14)"/><circle cx="345.1" cy="301.9" r="2.4" fill="url(#g2)"/><circle cx="408.7" cy="229.9" r="2.2" fill="url(#g6)"/><circle cx="431.9" cy="297.9" r="3.4" fill="url(#g5)"/><circle cx="314.7" cy="142.2" r="2.7" fill="url(#g6)"/><circle cx="361.1" cy="357.1" r="2.8" fill="url(#g10)"/><circle cx="364.4" cy="363.3" r="3.2" fill="url(#g11)"/><circle cx="325.8" cy="223.4" r="2.3" fill="url(#g0)"/><circle cx="385.0" cy="214.1" r="3.7" fill="url(#g15)"/><circle cx="440.7" cy="305.5" r="2.8" fill="url(#g8)"/><circle cx="386.5" cy="350.6" r="2.6" fill="url(#g16)"/><circle cx="360.7" cy="165.1" r="3.5" fill="url(#g10)"/><circle cx="367.4" cy="256.0" r="2.8" fill="url(#g16)"/><circle cx="471.0" cy="260.9" r="2.4" fill="url(#g5)"/><circle cx="376.6" cy="292.1" r="4.1" fill="url(#g7)"/><circle cx="398.0" cy="310.6" r="3.7" fill="url(#g7)"/><circle cx="362.4" cy="190.9" r="2.5" fill="url(#g8)"/><circle cx="384.6" cy="408.0" r="3.8" fill="url(#g5)"/><circle cx="339.5" cy="192.8" r="2.4" fill="url(#g8)"/><circle cx="506.2" cy="261.2" r="3.7" fill="url(#g5)"/><circle cx="350.6" cy="247.7" r="2.6" fill="url(#g7)"/><circle cx="323.1" cy="337.3" r="2.4" fill="url(#g6)"/><circle cx="461.5" cy="174.0" r="2.9" fill="url(#g9)"/><circle cx="403.9" cy="145.8" r="3.2" fill="url(#g6)"/><circle cx="343.7" cy="233.0" r="2.3" fill="url(#g3)"/><circle cx="467.0" cy="261.5" r="2.6" fill="url(#g9)"/><circle cx="330.1" cy="327.1" r="2.6" fill="url(#g10)"/><circle cx="472.5" cy="338.6" r="2.3" fill="url(#g15)"/><circle cx="523.9" cy="237.8" r="2.7" fill="url(#g13)"/><circle cx="376.3" cy="356.7" r="2.7" fill="url(#g14)"/><circle cx="402.7" cy="242.5" r="2.8" fill="url(#g4)"/><circle cx="413.2" cy="394.8" r="2.7" fill="url(#g0)"/><circle cx="483.3" cy="375.5" r="2.2" fill="url(#g14)"/><circle cx="433.2" cy="124.0" r="2.5" fill="url(#g6)"/><circle cx="352.2" cy="376.0" r="2.2" fill="url(#g4)"/><circle cx="440.7" cy="160.4" r="2.7" fill="url(#g13)"/><circle cx="385.9" cy="317.3" r="4.0" fill="url(#g0)"/><circle cx="332.7" cy="383.0" r="2.4" fill="url(#g5)"/><circle cx="423.3" cy="110.1" r="2.8" fill="url(#g10)"/><circle cx="492.8" cy="375.3" r="2.3" fill="url(#g8)"/><circle cx="414.3" cy="420.9" r="2.6" fill="url(#g5)"/><circle cx="379.4" cy="330.3" r="2.4" fill="url(#g8)"/><circle cx="428.3" cy="241.9" r="2.4" fill="url(#g6)"/><circle cx="420.0" cy="287.0" r="2.6" fill="url(#g2)"/><circle cx="374.7" cy="206.9" r="2.4" fill="url(#g8)"/><circle cx="367.4" cy="403.8" r="2.7" fill="url(#g16)"/><circle cx="391.7" cy="405.3" r="2.6" fill="url(#g2)"/><circle cx="383.0" cy="180.0" r="2.3" fill="url(#g3)"/><circle cx="500.5" cy="328.0" r="2.8" fill="url(#g10)"/><circle cx="366.0" cy="354.8" r="2.9" fill="url(#g8)"/><circle cx="498.4" cy="256.4" r="2.5" fill="url(#g7)"/><circle cx="474.9" cy="241.0" r="2.9" fill="url(#g14)"/><circle cx="380.4" cy="376.4" r="2.9" fill="url(#g9)"/><circle cx="369.3" cy="245.8" r="4.5" fill="url(#g5)"/><circle cx="377.3" cy="354.3" r="3.2" fill="url(#g15)"/><circle cx="423.3" cy="237.3" r="2.6" fill="url(#g11)"/><circle cx="356.0" cy="400.8" r="2.5" fill="url(#g8)"/><circle cx="411.1" cy="273.8" r="5.2" fill="url(#g6)"/><circle cx="482.1" cy="194.0" r="2.5" fill="url(#g5)"/><circle cx="427.3" cy="146.5" r="2.9" fill="url(#g12)"/><circle cx="334.0" cy="260.8" r="3.5" fill="url(#g8)"/><circle cx="322.6" cy="230.4" r="2.8" fill="url(#g10)"/><circle cx="319.4" cy="287.0" r="2.3" fill="url(#g11)"/><circle cx="321.9" cy="346.2" r="3.3" fill="url(#g2)"/><circle cx="304.5" cy="206.6" r="2.8" fill="url(#g8)"/><circle cx="441.2" cy="343.4" r="3.5" fill="url(#g2)"/><circle cx="388.3" cy="152.9" r="2.7" fill="url(#g13)"/><circle cx="491.2" cy="386.8" r="2.7" fill="url(#g7)"/><circle cx="514.0" cy="244.7" r="2.2" fill="url(#g13)"/><circle cx="374.9" cy="356.6" r="2.6" fill="url(#g7)"/><circle cx="316.7" cy="153.2" r="2.7" fill="url(#g6)"/><circle cx="416.9" cy="362.5" r="2.3" fill="url(#g2)"/><circle cx="337.3" cy="177.3" r="3.7" fill="url(#g6)"/><circle cx="389.7" cy="338.0" r="5.0" fill="url(#g15)"/><circle cx="350.1" cy="310.6" r="2.7" fill="url(#g0)"/><circle cx="550.3" cy="250.8" r="2.3" fill="url(#g8)"/><circle cx="400.1" cy="232.2" r="2.8" fill="url(#g2)"/><circle cx="466.9" cy="143.7" r="2.4" fill="url(#g8)"/><circle cx="415.1" cy="156.9" r="2.4" fill="url(#g13)"/><circle cx="552.4" cy="317.3" r="2.4" fill="url(#g4)"/><circle cx="342.2" cy="319.7" r="2.6" fill="url(#g6)"/><circle cx="447.7" cy="252.5" r="2.8" fill="url(#g8)"/><circle cx="470.2" cy="223.2" r="2.8" fill="url(#g8)"/><circle cx="459.2" cy="343.4" r="2.5" fill="url(#g14)"/><circle cx="453.6" cy="264.1" r="2.5" fill="url(#g10)"/><circle cx="425.6" cy="117.8" r="2.5" fill="url(#g7)"/><circle cx="366.7" cy="169.8" r="3.3" fill="url(#g10)"/><circle cx="366.9" cy="381.1" r="3.4" fill="url(#g10)"/><circle cx="311.9" cy="192.2" r="2.4" fill="url(#g9)"/><circle cx="411.6" cy="236.5" r="2.3" fill="url(#g13)"/><circle cx="449.5" cy="141.8" r="2.5" fill="url(#g11)"/><circle cx="496.2" cy="218.3" r="2.5" fill="url(#g0)"/><circle cx="388.8" cy="323.4" r="4.1" fill="url(#g9)"/><circle cx="429.4" cy="196.8" r="3.0" fill="url(#g13)"/><circle cx="337.4" cy="389.3" r="3.0" fill="url(#g2)"/><circle cx="477.2" cy="145.6" r="2.2" fill="url(#g2)"/><circle cx="486.9" cy="359.3" r="2.3" fill="url(#g12)"/><circle cx="410.0" cy="308.7" r="4.9" fill="url(#g6)"/><circle cx="480.3" cy="304.8" r="3.7" fill="url(#g0)"/><circle cx="501.4" cy="351.4" r="2.5" fill="url(#g7)"/><circle cx="394.6" cy="175.0" r="4.2" fill="url(#g2)"/><circle cx="400.5" cy="268.1" r="2.4" fill="url(#g15)"/><circle cx="400.4" cy="175.5" r="2.9" fill="url(#g9)"/><circle cx="381.4" cy="309.6" r="3.3" fill="url(#g9)"/><circle cx="407.5" cy="191.0" r="2.3" fill="url(#g0)"/><circle cx="532.0" cy="335.5" r="3.1" fill="url(#g3)"/><circle cx="427.8" cy="159.7" r="2.6" fill="url(#g3)"/><circle cx="338.9" cy="163.2" r="2.7" fill="url(#g12)"/><circle cx="463.7" cy="203.4" r="3.1" fill="url(#g6)"/><circle cx="365.1" cy="411.8" r="2.4" fill="url(#g7)"/><circle cx="348.4" cy="279.4" r="2.6" fill="url(#g6)"/><circle cx="427.0" cy="307.0" r="2.4" fill="url(#g8)"/><circle cx="444.0" cy="406.1" r="2.2" fill="url(#g11)"/><circle cx="448.4" cy="296.6" r="2.6" fill="url(#g1)"/><circle cx="404.2" cy="202.6" r="2.4" fill="url(#g5)"/><circle cx="388.9" cy="161.2" r="2.3" fill="url(#g11)"/><circle cx="471.7" cy="277.7" r="2.5" fill="url(#g7)"/><circle cx="397.2" cy="304.2" r="3.4" fill="url(#g5)"/><circle cx="471.5" cy="364.3" r="2.5" fill="url(#g15)"/><circle cx="438.1" cy="332.4" r="2.3" fill="url(#g8)"/><circle cx="394.7" cy="370.6" r="2.3" fill="url(#g7)"/><circle cx="487.4" cy="186.0" r="3.2" fill="url(#g13)"/><circle cx="365.0" cy="305.1" r="2.3" fill="url(#g10)"/><circle cx="541.4" cy="314.4" r="2.3" fill="url(#g15)"/><circle cx="306.2" cy="171.6" r="2.5" fill="url(#g6)"/><circle cx="486.6" cy="213.5" r="2.6" fill="url(#g14)"/><circle cx="433.0" cy="235.9" r="2.6" fill="url(#g4)"/><circle cx="388.6" cy="332.5" r="2.4" fill="url(#g4)"/><circle cx="319.9" cy="184.2" r="3.2" fill="url(#g10)"/><circle cx="387.1" cy="308.8" r="2.3" fill="url(#g6)"/><circle cx="449.9" cy="364.8" r="2.8" fill="url(#g14)"/><circle cx="448.5" cy="418.2" r="2.3" fill="url(#g11)"/><circle cx="444.5" cy="425.3" r="2.4" fill="url(#g4)"/><circle cx="399.1" cy="255.1" r="2.2" fill="url(#g14)"/><circle cx="424.7" cy="233.3" r="2.5" fill="url(#g7)"/><circle cx="350.9" cy="201.5" r="2.7" fill="url(#g15)"/><circle cx="347.9" cy="214.6" r="2.5" fill="url(#g14)"/><circle cx="320.1" cy="279.7" r="2.4" fill="url(#g6)"/><circle cx="431.0" cy="220.5" r="2.2" fill="url(#g6)"/><circle cx="456.4" cy="266.5" r="2.5" fill="url(#g16)"/><circle cx="333.7" cy="270.9" r="3.5" fill="url(#g7)"/><circle cx="466.0" cy="227.4" r="2.8" fill="url(#g3)"/><circle cx="511.3" cy="222.3" r="2.6" fill="url(#g15)"/><circle cx="397.2" cy="201.5" r="2.5" fill="url(#g14)"/><circle cx="343.0" cy="313.5" r="2.2" fill="url(#g3)"/><circle cx="371.8" cy="229.7" r="4.4" fill="url(#g2)"/><circle cx="400.7" cy="279.5" r="2.8" fill="url(#g7)"/><circle cx="474.5" cy="289.4" r="4.0" fill="url(#g9)"/><circle cx="391.0" cy="313.7" r="2.4" fill="url(#g6)"/><circle cx="433.9" cy="154.9" r="2.8" fill="url(#g5)"/><circle cx="544.7" cy="219.0" r="2.9" fill="url(#g0)"/><circle cx="317.5" cy="275.6" r="2.7" fill="url(#g2)"/><circle cx="442.5" cy="193.2" r="3.4" fill="url(#g16)"/><circle cx="482.3" cy="264.6" r="2.3" fill="url(#g14)"/><circle cx="390.3" cy="400.5" r="2.2" fill="url(#g5)"/><circle cx="443.4" cy="317.7" r="3.4" fill="url(#g7)"/><circle cx="386.0" cy="330.2" r="2.4" fill="url(#g10)"/><circle cx="339.1" cy="265.3" r="2.6" fill="url(#g3)"/><circle cx="339.4" cy="212.0" r="3.4" fill="url(#g6)"/><circle cx="441.5" cy="325.9" r="5.4" fill="url(#g10)"/><circle cx="369.8" cy="268.1" r="2.5" fill="url(#g5)"/><circle cx="355.6" cy="270.3" r="2.7" fill="url(#g8)"/><circle cx="321.5" cy="142.6" r="3.2" fill="url(#g0)"/><circle cx="491.1" cy="342.8" r="2.6" fill="url(#g4)"/><circle cx="431.2" cy="134.5" r="2.3" fill="url(#g6)"/><circle cx="491.4" cy="329.2" r="3.3" fill="url(#g4)"/><circle cx="452.5" cy="316.5" r="2.5" fill="url(#g8)"/><circle cx="494.6" cy="309.8" r="2.5" fill="url(#g4)"/><circle cx="392.4" cy="114.8" r="2.5" fill="url(#g9)"/><circle cx="323.3" cy="289.2" r="2.8" fill="url(#g14)"/><circle cx="459.3" cy="322.5" r="3.1" fill="url(#g11)"/><circle cx="326.6" cy="142.8" r="2.7" fill="url(#g15)"/><circle cx="449.5" cy="219.4" r="2.5" fill="url(#g13)"/><circle cx="354.9" cy="260.4" r="2.7" fill="url(#g5)"/><circle cx="353.4" cy="221.8" r="2.7" fill="url(#g6)"/><circle cx="515.8" cy="341.7" r="3.3" fill="url(#g8)"/><circle cx="388.7" cy="246.2" r="2.5" fill="url(#g8)"/><circle cx="466.3" cy="219.2" r="2.4" fill="url(#g1)"/><circle cx="442.5" cy="360.5" r="2.5" fill="url(#g4)"/><circle cx="499.6" cy="297.5" r="2.7" fill="url(#g8)"/><circle cx="473.3" cy="379.6" r="2.8" fill="url(#g15)"/><circle cx="437.7" cy="286.5" r="2.8" fill="url(#g12)"/><circle cx="511.9" cy="290.6" r="4.2" fill="url(#g3)"/><circle cx="313.4" cy="299.9" r="3.1" fill="url(#g12)"/><circle cx="454.1" cy="391.0" r="2.7" fill="url(#g6)"/><circle cx="527.7" cy="375.9" r="2.6" fill="url(#g12)"/><circle cx="287.1" cy="257.0" r="2.5" fill="url(#g6)"/><circle cx="397.7" cy="197.1" r="2.4" fill="url(#g7)"/><circle cx="444.8" cy="348.6" r="2.4" fill="url(#g4)"/><circle cx="316.2" cy="364.2" r="2.6" fill="url(#g7)"/><circle cx="483.2" cy="273.2" r="5.3" fill="url(#g11)"/><circle cx="323.8" cy="212.6" r="2.8" fill="url(#g12)"/><circle cx="337.5" cy="180.5" r="2.6" fill="url(#g11)"/><circle cx="316.1" cy="208.9" r="2.6" fill="url(#g6)"/><circle cx="464.4" cy="315.2" r="4.5" fill="url(#g7)"/><circle cx="448.3" cy="326.7" r="3.1" fill="url(#g0)"/><circle cx="457.5" cy="214.9" r="2.3" fill="url(#g0)"/><circle cx="402.7" cy="418.5" r="2.4" fill="url(#g6)"/><circle cx="436.7" cy="364.2" r="2.5" fill="url(#g6)"/><circle cx="322.7" cy="288.4" r="2.4" fill="url(#g5)"/><circle cx="304.0" cy="210.3" r="2.3" fill="url(#g2)"/><circle cx="341.9" cy="177.4" r="2.4" fill="url(#g10)"/><circle cx="439.4" cy="392.9" r="3.3" fill="url(#g12)"/><circle cx="412.9" cy="258.4" r="2.8" fill="url(#g8)"/><circle cx="470.4" cy="204.1" r="2.3" fill="url(#g16)"/><circle cx="440.7" cy="122.1" r="2.6" fill="url(#g10)"/><circle cx="345.5" cy="130.0" r="2.9" fill="url(#g9)"/><circle cx="446.8" cy="410.4" r="2.3" fill="url(#g11)"/><circle cx="519.2" cy="386.6" r="2.5" fill="url(#g8)"/><circle cx="528.1" cy="225.5" r="2.3" fill="url(#g7)"/><circle cx="331.6" cy="227.5" r="2.3" fill="url(#g12)"/><circle cx="342.7" cy="392.0" r="2.7" fill="url(#g0)"/><circle cx="439.6" cy="260.3" r="2.6" fill="url(#g4)"/><circle cx="468.5" cy="387.0" r="3.3" fill="url(#g14)"/><circle cx="482.9" cy="395.2" r="2.5" fill="url(#g7)"/><circle cx="350.9" cy="253.0" r="5.7" fill="url(#g16)"/><circle cx="435.0" cy="320.0" r="2.4" fill="url(#g12)"/><circle cx="520.1" cy="262.4" r="2.7" fill="url(#g9)"/><circle cx="435.3" cy="293.5" r="2.3" fill="url(#g12)"/><circle cx="547.0" cy="309.9" r="2.5" fill="url(#g7)"/><circle cx="517.5" cy="281.8" r="2.4" fill="url(#g2)"/><circle cx="436.9" cy="187.5" r="4.4" fill="url(#g5)"/><circle cx="482.4" cy="299.4" r="2.6" fill="url(#g13)"/><circle cx="467.5" cy="416.6" r="3.1" fill="url(#g5)"/><circle cx="294.0" cy="314.4" r="3.7" fill="url(#g4)"/><circle cx="480.1" cy="179.9" r="2.5" fill="url(#g14)"/><circle cx="442.9" cy="204.0" r="2.3" fill="url(#g16)"/><circle cx="352.0" cy="304.0" r="2.3" fill="url(#g13)"/><circle cx="405.3" cy="150.0" r="2.5" fill="url(#g5)"/><circle cx="379.4" cy="130.9" r="2.6" fill="url(#g9)"/><circle cx="372.5" cy="400.6" r="3.1" fill="url(#g1)"/><circle cx="408.3" cy="159.1" r="2.3" fill="url(#g15)"/><circle cx="318.6" cy="301.1" r="2.6" fill="url(#g7)"/><circle cx="402.0" cy="158.1" r="2.7" fill="url(#g3)"/><circle cx="433.3" cy="250.8" r="5.6" fill="url(#g6)"/><circle cx="428.2" cy="407.9" r="2.5" fill="url(#g5)"/><circle cx="412.1" cy="257.3" r="2.4" fill="url(#g7)"/><circle cx="450.0" cy="268.1" r="3.0" fill="url(#g11)"/><circle cx="395.5" cy="242.4" r="2.5" fill="url(#g9)"/><circle cx="362.1" cy="343.0" r="2.7" fill="url(#g9)"/><circle cx="537.1" cy="339.0" r="2.5" fill="url(#g3)"/><circle cx="448.1" cy="119.5" r="2.3" fill="url(#g0)"/><circle cx="470.6" cy="308.0" r="5.1" fill="url(#g7)"/><circle cx="426.8" cy="169.6" r="3.1" fill="url(#g3)"/><circle cx="330.9" cy="321.6" r="2.4" fill="url(#g16)"/><circle cx="421.5" cy="226.5" r="2.8" fill="url(#g7)"/><circle cx="354.0" cy="394.3" r="2.7" fill="url(#g0)"/><circle cx="338.3" cy="312.1" r="3.1" fill="url(#g13)"/><circle cx="442.7" cy="127.9" r="2.7" fill="url(#g7)"/><circle cx="330.5" cy="145.2" r="3.4" fill="url(#g6)"/><circle cx="482.4" cy="371.5" r="2.5" fill="url(#g7)"/><circle cx="497.6" cy="372.4" r="2.7" fill="url(#g9)"/><circle cx="412.4" cy="248.1" r="2.5" fill="url(#g7)"/><circle cx="495.6" cy="345.0" r="2.3" fill="url(#g10)"/><circle cx="350.3" cy="326.0" r="2.4" fill="url(#g15)"/><circle cx="529.7" cy="213.2" r="2.5" fill="url(#g10)"/><circle cx="421.0" cy="319.9" r="4.6" fill="url(#g12)"/><circle cx="377.7" cy="276.0" r="2.6" fill="url(#g3)"/><circle cx="444.5" cy="333.3" r="2.4" fill="url(#g1)"/><circle cx="434.5" cy="410.1" r="2.5" fill="url(#g9)"/><circle cx="524.3" cy="230.7" r="3.7" fill="url(#g5)"/><circle cx="520.4" cy="295.7" r="2.5" fill="url(#g6)"/><circle cx="400.4" cy="349.5" r="2.4" fill="url(#g6)"/><circle cx="483.5" cy="155.2" r="2.4" fill="url(#g6)"/><circle cx="295.3" cy="276.0" r="2.5" fill="url(#g4)"/><circle cx="390.8" cy="272.2" r="2.9" fill="url(#g10)"/><circle cx="422.3" cy="402.6" r="2.2" fill="url(#g12)"/><circle cx="412.6" cy="345.3" r="2.2" fill="url(#g4)"/><circle cx="377.0" cy="182.8" r="3.1" fill="url(#g11)"/><circle cx="421.3" cy="369.0" r="2.6" fill="url(#g2)"/><circle cx="356.7" cy="200.2" r="2.3" fill="url(#g2)"/><circle cx="460.4" cy="287.5" r="3.1" fill="url(#g14)"/><circle cx="427.3" cy="360.1" r="2.3" fill="url(#g10)"/><circle cx="435.0" cy="382.7" r="2.3" fill="url(#g6)"/><circle cx="447.3" cy="245.2" r="2.6" fill="url(#g4)"/><circle cx="511.2" cy="273.8" r="3.3" fill="url(#g12)"/><circle cx="380.3" cy="240.5" r="2.5" fill="url(#g5)"/><circle cx="533.9" cy="348.8" r="2.6" fill="url(#g7)"/><circle cx="457.7" cy="336.6" r="4.0" fill="url(#g7)"/><circle cx="379.5" cy="385.6" r="2.7" fill="url(#g16)"/><circle cx="484.2" cy="370.6" r="2.7" fill="url(#g15)"/><circle cx="495.5" cy="205.6" r="4.3" fill="url(#g16)"/><circle cx="348.4" cy="264.2" r="2.9" fill="url(#g0)"/><circle cx="371.8" cy="254.8" r="3.2" fill="url(#g8)"/><circle cx="420.9" cy="208.1" r="2.5" fill="url(#g6)"/><circle cx="411.7" cy="232.9" r="2.4" fill="url(#g6)"/><circle cx="365.5" cy="340.6" r="2.3" fill="url(#g13)"/><circle cx="371.1" cy="203.6" r="2.3" fill="url(#g7)"/><circle cx="433.9" cy="160.7" r="2.5" fill="url(#g5)"/><circle cx="480.3" cy="318.6" r="2.2" fill="url(#g7)"/><circle cx="375.6" cy="313.3" r="2.5" fill="url(#g6)"/><circle cx="396.2" cy="237.1" r="3.0" fill="url(#g6)"/><circle cx="516.4" cy="259.3" r="2.6" fill="url(#g2)"/><circle cx="457.2" cy="253.0" r="4.3" fill="url(#g4)"/><circle cx="357.0" cy="313.0" r="3.2" fill="url(#g5)"/><circle cx="515.2" cy="270.5" r="3.0" fill="url(#g12)"/><circle cx="413.9" cy="384.6" r="3.3" fill="url(#g6)"/><circle cx="508.1" cy="251.7" r="2.5" fill="url(#g13)"/><circle cx="326.7" cy="319.8" r="3.1" fill="url(#g3)"/><circle cx="543.4" cy="238.6" r="2.5" fill="url(#g14)"/><circle cx="447.8" cy="279.4" r="5.8" fill="url(#g7)"/><circle cx="516.9" cy="208.4" r="2.7" fill="url(#g6)"/><circle cx="341.7" cy="302.6" r="2.3" fill="url(#g11)"/><circle cx="423.8" cy="314.2" r="2.7" fill="url(#g8)"/><circle cx="364.0" cy="160.4" r="2.8" fill="url(#g10)"/><circle cx="418.4" cy="348.2" r="3.4" fill="url(#g14)"/><circle cx="305.2" cy="255.3" r="2.3" fill="url(#g11)"/><circle cx="517.7" cy="329.5" r="2.3" fill="url(#g5)"/><circle cx="485.3" cy="230.4" r="2.5" fill="url(#g14)"/><circle cx="456.3" cy="318.7" r="2.7" fill="url(#g14)"/><circle cx="365.0" cy="252.2" r="2.3" fill="url(#g14)"/><circle cx="358.8" cy="366.4" r="2.4" fill="url(#g13)"/><circle cx="368.8" cy="213.9" r="2.2" fill="url(#g7)"/><circle cx="340.7" cy="366.3" r="3.1" fill="url(#g4)"/><circle cx="370.7" cy="308.3" r="2.6" fill="url(#g15)"/><circle cx="434.1" cy="237.5" r="3.3" fill="url(#g1)"/><circle cx="357.5" cy="154.8" r="2.4" fill="url(#g13)"/><circle cx="453.5" cy="413.8" r="2.4" fill="url(#g8)"/><circle cx="477.1" cy="262.1" r="2.9" fill="url(#g11)"/><circle cx="352.8" cy="369.6" r="2.6" fill="url(#g6)"/><circle cx="421.8" cy="181.9" r="2.6" fill="url(#g10)"/><circle cx="523.6" cy="196.5" r="2.3" fill="url(#g2)"/><circle cx="471.2" cy="266.2" r="3.3" fill="url(#g11)"/><circle cx="366.7" cy="132.2" r="2.6" fill="url(#g10)"/><circle cx="372.0" cy="191.6" r="2.5" fill="url(#g4)"/><circle cx="404.3" cy="383.7" r="2.7" fill="url(#g5)"/><circle cx="362.6" cy="274.9" r="2.8" fill="url(#g9)"/><circle cx="329.5" cy="127.5" r="3.4" fill="url(#g15)"/><circle cx="480.8" cy="311.6" r="2.7" fill="url(#g7)"/><circle cx="544.2" cy="368.5" r="2.7" fill="url(#g0)"/><circle cx="396.5" cy="129.9" r="2.3" fill="url(#g10)"/><circle cx="509.5" cy="284.7" r="3.4" fill="url(#g4)"/><circle cx="412.5" cy="329.0" r="2.5" fill="url(#g7)"/><circle cx="538.6" cy="257.6" r="2.7" fill="url(#g6)"/><circle cx="449.2" cy="318.1" r="2.4" fill="url(#g11)"/><circle cx="441.3" cy="246.9" r="3.1" fill="url(#g13)"/><circle cx="366.4" cy="264.0" r="2.3" fill="url(#g6)"/><circle cx="335.9" cy="363.4" r="3.2" fill="url(#g1)"/><circle cx="465.2" cy="192.1" r="2.8" fill="url(#g7)"/><circle cx="512.2" cy="341.7" r="2.4" fill="url(#g7)"/><circle cx="445.3" cy="269.5" r="3.7" fill="url(#g7)"/><circle cx="454.9" cy="343.1" r="2.5" fill="url(#g7)"/><circle cx="334.5" cy="158.7" r="2.5" fill="url(#g8)"/><circle cx="317.7" cy="341.3" r="2.5" fill="url(#g7)"/><circle cx="424.6" cy="328.4" r="2.3" fill="url(#g9)"/><circle cx="483.1" cy="169.9" r="2.4" fill="url(#g14)"/><circle cx="435.3" cy="222.9" r="3.3" fill="url(#g14)"/><circle cx="416.8" cy="199.2" r="2.4" fill="url(#g5)"/><circle cx="424.3" cy="161.7" r="2.9" fill="url(#g0)"/><circle cx="303.0" cy="319.1" r="2.6" fill="url(#g8)"/><circle cx="505.7" cy="296.0" r="2.7" fill="url(#g11)"/><circle cx="372.8" cy="287.2" r="2.5" fill="url(#g7)"/><circle cx="307.2" cy="144.2" r="2.8" fill="url(#g6)"/><circle cx="412.3" cy="408.7" r="2.6" fill="url(#g14)"/><circle cx="347.0" cy="153.7" r="2.6" fill="url(#g6)"/><circle cx="491.7" cy="333.5" r="2.3" fill="url(#g6)"/><circle cx="484.5" cy="205.8" r="2.6" fill="url(#g8)"/><circle cx="363.1" cy="209.4" r="3.3" fill="url(#g3)"/><circle cx="339.8" cy="372.3" r="2.6" fill="url(#g14)"/><circle cx="427.9" cy="293.6" r="4.2" fill="url(#g8)"/><circle cx="408.2" cy="288.8" r="2.9" fill="url(#g5)"/><circle cx="343.0" cy="328.2" r="2.4" fill="url(#g8)"/><circle cx="362.4" cy="177.7" r="2.3" fill="url(#g5)"/><circle cx="428.0" cy="258.2" r="3.9" fill="url(#g9)"/><circle cx="314.3" cy="280.1" r="2.3" fill="url(#g15)"/><circle cx="445.2" cy="365.1" r="2.5" fill="url(#g6)"/><circle cx="373.6" cy="365.6" r="4.1" fill="url(#g11)"/><circle cx="494.8" cy="221.6" r="2.4" fill="url(#g16)"/><circle cx="416.1" cy="174.3" r="2.4" fill="url(#g0)"/><circle cx="405.7" cy="295.9" r="2.2" fill="url(#g6)"/><circle cx="534.2" cy="361.8" r="3.0" fill="url(#g1)"/><circle cx="495.0" cy="357.0" r="2.4" fill="url(#g10)"/><circle cx="359.3" cy="283.2" r="2.7" fill="url(#g14)"/><circle cx="534.3" cy="367.5" r="2.7" fill="url(#g14)"/><circle cx="376.5" cy="230.1" r="2.3" fill="url(#g8)"/><circle cx="376.2" cy="254.3" r="2.2" fill="url(#g13)"/><circle cx="317.2" cy="206.5" r="2.6" fill="url(#g8)"/><circle cx="320.3" cy="264.0" r="2.3" fill="url(#g10)"/><circle cx="542.5" cy="301.2" r="2.5" fill="url(#g8)"/><circle cx="450.2" cy="241.3" r="3.2" fill="url(#g4)"/><circle cx="310.2" cy="162.8" r="2.6" fill="url(#g5)"/><circle cx="441.6" cy="416.9" r="2.8" fill="url(#g15)"/><circle cx="310.0" cy="322.4" r="2.3" fill="url(#g2)"/><circle cx="375.3" cy="243.7" r="2.4" fill="url(#g2)"/><circle cx="514.4" cy="326.7" r="2.7" fill="url(#g14)"/><circle cx="370.5" cy="235.5" r="3.1" fill="url(#g3)"/><circle cx="405.3" cy="285.0" r="3.2" fill="url(#g11)"/><circle cx="550.2" cy="322.8" r="2.4" fill="url(#g5)"/><circle cx="344.7" cy="191.1" r="2.4" fill="url(#g7)"/><circle cx="313.4" cy="247.8" r="2.5" fill="url(#g1)"/><circle cx="392.6" cy="182.0" r="2.8" fill="url(#g5)"/><circle cx="501.7" cy="292.9" r="2.6" fill="url(#g3)"/><circle cx="490.7" cy="349.9" r="2.6" fill="url(#g14)"/><circle cx="493.8" cy="323.3" r="2.7" fill="url(#g13)"/><circle cx="471.9" cy="227.1" r="2.6" fill="url(#g5)"/><circle cx="446.1" cy="114.3" r="2.6" fill="url(#g12)"/><circle cx="399.0" cy="401.3" r="2.2" fill="url(#g4)"/><circle cx="510.9" cy="226.4" r="2.3" fill="url(#g0)"/><circle cx="400.4" cy="296.1" r="2.9" fill="url(#g7)"/><circle cx="380.7" cy="209.7" r="2.4" fill="url(#g3)"/><circle cx="475.3" cy="302.5" r="2.4" fill="url(#g5)"/><circle cx="412.8" cy="202.6" r="2.7" fill="url(#g7)"/><circle cx="411.0" cy="194.2" r="2.4" fill="url(#g8)"/><circle cx="522.9" cy="366.5" r="2.4" fill="url(#g3)"/><circle cx="532.0" cy="257.9" r="2.9" fill="url(#g6)"/><circle cx="291.1" cy="223.2" r="2.3" fill="url(#g2)"/><circle cx="384.2" cy="230.5" r="3.3" fill="url(#g10)"/><circle cx="421.5" cy="176.0" r="2.7" fill="url(#g13)"/><circle cx="340.8" cy="146.0" r="2.7" fill="url(#g13)"/><circle cx="515.7" cy="216.1" r="2.6" fill="url(#g5)"/><circle cx="360.8" cy="306.6" r="2.4" fill="url(#g8)"/><circle cx="329.1" cy="237.6" r="5.1" fill="url(#g7)"/><circle cx="549.3" cy="298.2" r="3.1" fill="url(#g7)"/><circle cx="388.4" cy="219.4" r="2.7" fill="url(#g5)"/><circle cx="432.7" cy="424.9" r="2.6" fill="url(#g15)"/><circle cx="458.8" cy="349.2" r="2.9" fill="url(#g5)"/><circle cx="396.1" cy="410.0" r="2.4" fill="url(#g3)"/><circle cx="422.0" cy="351.2" r="2.8" fill="url(#g3)"/><circle cx="530.8" cy="217.5" r="2.3" fill="url(#g9)"/><circle cx="400.1" cy="186.7" r="2.8" fill="url(#g5)"/><circle cx="349.8" cy="234.1" r="3.1" fill="url(#g9)"/><circle cx="415.1" cy="267.2" r="2.7" fill="url(#g14)"/><circle cx="368.1" cy="185.2" r="3.3" fill="url(#g5)"/><circle cx="389.1" cy="316.9" r="2.7" fill="url(#g8)"/><circle cx="466.6" cy="274.7" r="2.6" fill="url(#g2)"/><circle cx="414.2" cy="321.0" r="3.3" fill="url(#g12)"/><circle cx="409.7" cy="425.2" r="2.7" fill="url(#g5)"/><circle cx="412.3" cy="260.0" r="2.8" fill="url(#g0)"/><circle cx="379.7" cy="390.3" r="2.6" fill="url(#g14)"/><circle cx="368.4" cy="291.4" r="2.4" fill="url(#g10)"/><circle cx="429.0" cy="264.9" r="2.8" fill="url(#g6)"/><circle cx="444.8" cy="172.7" r="2.9" fill="url(#g6)"/><circle cx="385.3" cy="390.2" r="2.5" fill="url(#g1)"/><circle cx="312.0" cy="271.4" r="2.4" fill="url(#g8)"/><circle cx="454.7" cy="269.7" r="2.5" fill="url(#g2)"/><circle cx="417.7" cy="334.2" r="2.4" fill="url(#g12)"/><circle cx="433.7" cy="369.1" r="2.7" fill="url(#g4)"/><circle cx="310.1" cy="293.2" r="2.5" fill="url(#g12)"/><circle cx="404.0" cy="369.9" r="2.5" fill="url(#g10)"/><circle cx="350.9" cy="169.3" r="3.4" fill="url(#g8)"/><circle cx="475.8" cy="252.3" r="2.6" fill="url(#g5)"/><circle cx="362.3" cy="146.7" r="2.5" fill="url(#g8)"/><circle cx="456.0" cy="324.8" r="2.3" fill="url(#g7)"/><circle cx="442.3" cy="363.0" r="2.5" fill="url(#g7)"/><circle cx="333.5" cy="325.1" r="2.4" fill="url(#g7)"/><circle cx="358.3" cy="265.2" r="3.1" fill="url(#g12)"/><circle cx="438.2" cy="272.4" r="2.4" fill="url(#g10)"/><circle cx="424.7" cy="196.6" r="2.2" fill="url(#g8)"/><circle cx="339.5" cy="355.5" r="3.0" fill="url(#g4)"/><circle cx="452.0" cy="208.2" r="2.3" fill="url(#g0)"/><circle cx="440.9" cy="131.8" r="3.2" fill="url(#g6)"/><circle cx="407.4" cy="217.3" r="2.4" fill="url(#g0)"/><circle cx="417.1" cy="204.0" r="2.6" fill="url(#g13)"/><circle cx="385.8" cy="171.0" r="2.3" fill="url(#g15)"/><circle cx="398.2" cy="392.1" r="3.5" fill="url(#g1)"/><circle cx="356.3" cy="285.7" r="2.4" fill="url(#g5)"/><circle cx="305.5" cy="296.5" r="2.8" fill="url(#g4)"/><circle cx="452.3" cy="329.1" r="3.4" fill="url(#g13)"/><circle cx="375.5" cy="268.3" r="2.6" fill="url(#g3)"/><circle cx="398.8" cy="253.3" r="2.6" fill="url(#g10)"/><circle cx="354.4" cy="344.5" r="2.3" fill="url(#g6)"/><circle cx="336.8" cy="304.2" r="2.7" fill="url(#g14)"/><circle cx="469.7" cy="295.8" r="2.4" fill="url(#g13)"/><circle cx="518.4" cy="307.4" r="2.3" fill="url(#g11)"/><circle cx="490.7" cy="164.2" r="2.3" fill="url(#g1)"/><circle cx="489.8" cy="257.1" r="2.6" fill="url(#g4)"/><circle cx="405.8" cy="301.1" r="2.3" fill="url(#g3)"/><circle cx="418.2" cy="305.3" r="4.8" fill="url(#g6)"/><circle cx="355.0" cy="275.6" r="2.3" fill="url(#g8)"/><circle cx="372.2" cy="403.8" r="3.0" fill="url(#g9)"/><circle cx="527.2" cy="199.5" r="3.0" fill="url(#g8)"/><circle cx="544.0" cy="327.4" r="2.3" fill="url(#g1)"/><circle cx="421.6" cy="411.0" r="2.5" fill="url(#g11)"/><circle cx="448.2" cy="162.3" r="4.4" fill="url(#g4)"/><circle cx="365.5" cy="149.7" r="2.2" fill="url(#g5)"/><circle cx="393.9" cy="285.3" r="3.5" fill="url(#g0)"/><circle cx="441.8" cy="294.5" r="2.4" fill="url(#g4)"/><circle cx="427.6" cy="202.9" r="3.6" fill="url(#g4)"/><circle cx="338.8" cy="218.3" r="4.2" fill="url(#g7)"/><circle cx="538.6" cy="283.2" r="2.5" fill="url(#g1)"/><circle cx="336.1" cy="289.3" r="2.6" fill="url(#g3)"/><circle cx="304.2" cy="245.7" r="2.6" fill="url(#g5)"/><circle cx="374.0" cy="162.6" r="2.4" fill="url(#g3)"/><circle cx="443.1" cy="144.9" r="2.6" fill="url(#g15)"/><circle cx="295.1" cy="297.5" r="3.2" fill="url(#g16)"/><circle cx="373.4" cy="408.8" r="2.4" fill="url(#g3)"/><circle cx="360.9" cy="302.3" r="2.6" fill="url(#g16)"/><circle cx="398.9" cy="208.8" r="3.4" fill="url(#g0)"/><circle cx="412.6" cy="299.6" r="2.2" fill="url(#g10)"/><circle cx="352.8" cy="320.1" r="2.7" fill="url(#g12)"/><circle cx="419.4" cy="147.4" r="3.1" fill="url(#g12)"/><circle cx="463.3" cy="273.3" r="2.5" fill="url(#g11)"/><circle cx="515.5" cy="188.4" r="2.3" fill="url(#g15)"/><circle cx="295.7" cy="282.1" r="2.9" fill="url(#g14)"/><circle cx="534.8" cy="238.4" r="2.5" fill="url(#g11)"/><circle cx="366.9" cy="145.8" r="3.2" fill="url(#g2)"/><circle cx="359.0" cy="260.0" r="2.3" fill="url(#g7)"/><circle cx="320.6" cy="308.2" r="2.2" fill="url(#g7)"/><circle cx="407.7" cy="174.4" r="2.3" fill="url(#g14)"/><circle cx="374.4" cy="260.1" r="2.3" fill="url(#g4)"/><circle cx="489.4" cy="240.3" r="2.6" fill="url(#g10)"/><circle cx="539.3" cy="312.2" r="2.4" fill="url(#g13)"/><circle cx="428.3" cy="278.2" r="2.9" fill="url(#g14)"/><circle cx="489.5" cy="251.2" r="2.4" fill="url(#g5)"/><circle cx="456.8" cy="205.4" r="2.5" fill="url(#g11)"/><circle cx="356.9" cy="139.1" r="3.3" fill="url(#g7)"/><circle cx="543.6" cy="305.7" r="2.3" fill="url(#g2)"/><circle cx="494.0" cy="261.8" r="2.3" fill="url(#g13)"/><circle cx="366.4" cy="399.3" r="3.2" fill="url(#g5)"/><circle cx="347.4" cy="188.2" r="2.5" fill="url(#g14)"/><circle cx="421.7" cy="167.0" r="2.5" fill="url(#g6)"/><circle cx="474.1" cy="282.3" r="4.5" fill="url(#g7)"/><circle cx="441.3" cy="301.2" r="2.8" fill="url(#g6)"/><circle cx="367.8" cy="230.8" r="2.9" fill="url(#g0)"/><circle cx="353.9" cy="283.2" r="2.4" fill="url(#g10)"/><circle cx="527.1" cy="234.7" r="2.5" fill="url(#g5)"/><circle cx="402.9" cy="325.5" r="2.8" fill="url(#g1)"/><circle cx="390.0" cy="385.9" r="2.6" fill="url(#g14)"/><circle cx="492.3" cy="406.4" r="2.3" fill="url(#g16)"/><circle cx="366.3" cy="226.5" r="2.4" fill="url(#g5)"/><circle cx="436.6" cy="315.5" r="2.9" fill="url(#g14)"/><circle cx="509.7" cy="368.9" r="2.2" fill="url(#g14)"/><circle cx="502.9" cy="222.8" r="2.4" fill="url(#g2)"/><circle cx="391.4" cy="423.0" r="2.7" fill="url(#g8)"/><circle cx="339.5" cy="286.0" r="2.8" fill="url(#g14)"/><circle cx="358.2" cy="388.8" r="2.7" fill="url(#g4)"/><circle cx="522.3" cy="285.5" r="2.8" fill="url(#g11)"/><circle cx="341.5" cy="171.8" r="3.1" fill="url(#g14)"/><circle cx="465.9" cy="253.5" r="3.4" fill="url(#g4)"/><circle cx="452.3" cy="203.0" r="2.6" fill="url(#g7)"/><circle cx="445.8" cy="350.2" r="2.2" fill="url(#g11)"/><circle cx="493.5" cy="403.6" r="2.6" fill="url(#g10)"/><circle cx="414.9" cy="357.6" r="2.6" fill="url(#g14)"/><circle cx="553.5" cy="258.3" r="2.7" fill="url(#g14)"/><circle cx="336.9" cy="179.2" r="2.4" fill="url(#g6)"/><circle cx="387.6" cy="393.9" r="2.6" fill="url(#g15)"/><circle cx="441.9" cy="285.7" r="2.5" fill="url(#g9)"/><circle cx="382.7" cy="342.1" r="2.6" fill="url(#g9)"/><circle cx="322.5" cy="294.6" r="2.8" fill="url(#g15)"/><circle cx="376.1" cy="293.7" r="2.3" fill="url(#g13)"/><circle cx="366.0" cy="275.5" r="2.7" fill="url(#g8)"/><circle cx="390.8" cy="136.1" r="3.2" fill="url(#g3)"/><circle cx="460.9" cy="389.9" r="2.6" fill="url(#g4)"/><circle cx="347.5" cy="300.1" r="3.3" fill="url(#g6)"/><circle cx="372.3" cy="216.1" r="3.3" fill="url(#g6)"/><circle cx="420.5" cy="116.8" r="2.7" fill="url(#g8)"/><circle cx="327.1" cy="281.6" r="2.9" fill="url(#g7)"/><circle cx="548.0" cy="246.3" r="2.4" fill="url(#g3)"/><circle cx="296.5" cy="270.5" r="2.6" fill="url(#g1)"/><circle cx="434.4" cy="348.2" r="2.4" fill="url(#g8)"/><circle cx="403.8" cy="350.2" r="2.6" fill="url(#g1)"/><circle cx="515.2" cy="278.6" r="2.8" fill="url(#g6)"/><circle cx="348.7" cy="287.9" r="3.4" fill="url(#g1)"/><circle cx="525.0" cy="382.3" r="2.8" fill="url(#g16)"/><circle cx="401.8" cy="113.5" r="2.3" fill="url(#g6)"/><circle cx="448.2" cy="197.9" r="3.5" fill="url(#g12)"/><circle cx="375.5" cy="219.1" r="2.7" fill="url(#g16)"/><circle cx="410.6" cy="361.9" r="2.2" fill="url(#g12)"/><circle cx="418.8" cy="326.5" r="2.3" fill="url(#g14)"/><circle cx="540.3" cy="244.9" r="2.4" fill="url(#g4)"/><circle cx="418.8" cy="299.8" r="2.5" fill="url(#g14)"/><circle cx="337.5" cy="318.8" r="3.2" fill="url(#g3)"/><circle cx="361.9" cy="293.2" r="5.9" fill="url(#g15)"/><circle cx="421.4" cy="249.7" r="2.6" fill="url(#g0)"/><circle cx="483.8" cy="364.7" r="2.2" fill="url(#g14)"/><circle cx="510.4" cy="309.4" r="2.8" fill="url(#g6)"/><circle cx="320.8" cy="254.8" r="2.6" fill="url(#g14)"/><circle cx="392.6" cy="411.2" r="2.7" fill="url(#g6)"/><circle cx="413.4" cy="252.1" r="2.5" fill="url(#g6)"/><circle cx="363.0" cy="392.6" r="2.2" fill="url(#g9)"/><circle cx="377.3" cy="341.5" r="2.4" fill="url(#g8)"/><circle cx="472.4" cy="314.6" r="3.0" fill="url(#g2)"/><circle cx="474.3" cy="340.4" r="2.3" fill="url(#g1)"/><circle cx="520.5" cy="221.2" r="3.1" fill="url(#g16)"/><circle cx="318.0" cy="232.3" r="2.5" fill="url(#g7)"/><circle cx="371.2" cy="278.6" r="2.6" fill="url(#g13)"/><circle cx="338.8" cy="239.7" r="3.7" fill="url(#g4)"/><circle cx="508.7" cy="197.7" r="2.5" fill="url(#g5)"/><circle cx="475.2" cy="272.6" r="2.6" fill="url(#g3)"/><circle cx="331.6" cy="279.9" r="2.2" fill="url(#g16)"/><circle cx="391.8" cy="263.4" r="3.0" fill="url(#g6)"/><circle cx="334.5" cy="294.9" r="2.3" fill="url(#g16)"/><circle cx="533.1" cy="374.8" r="2.4" fill="url(#g0)"/><circle cx="446.6" cy="373.1" r="2.2" fill="url(#g6)"/><circle cx="339.2" cy="124.6" r="2.2" fill="url(#g3)"/><circle cx="361.5" cy="254.4" r="2.3" fill="url(#g5)"/><circle cx="515.2" cy="258.9" r="2.7" fill="url(#g13)"/><circle cx="404.8" cy="164.6" r="2.3" fill="url(#g10)"/><circle cx="552.8" cy="302.3" r="2.3" fill="url(#g11)"/><circle cx="376.3" cy="214.0" r="2.6" fill="url(#g6)"/><circle cx="366.4" cy="202.5" r="3.4" fill="url(#g11)"/><circle cx="452.0" cy="179.4" r="2.3" fill="url(#g4)"/><circle cx="358.1" cy="256.1" r="2.7" fill="url(#g8)"/><circle cx="409.6" cy="350.9" r="2.5" fill="url(#g3)"/><circle cx="438.3" cy="233.3" r="2.6" fill="url(#g5)"/><circle cx="377.1" cy="258.0" r="2.7" fill="url(#g7)"/><circle cx="511.5" cy="296.0" r="5.1" fill="url(#g7)"/><circle cx="325.8" cy="302.8" r="2.7" fill="url(#g6)"/><circle cx="305.4" cy="187.0" r="2.5" fill="url(#g5)"/><circle cx="436.3" cy="403.2" r="3.1" fill="url(#g10)"/><circle cx="529.4" cy="277.6" r="2.3" fill="url(#g15)"/><circle cx="544.5" cy="284.6" r="2.2" fill="url(#g6)"/><circle cx="455.3" cy="153.1" r="2.8" fill="url(#g9)"/><circle cx="465.6" cy="269.2" r="2.3" fill="url(#g13)"/><circle cx="456.0" cy="284.8" r="2.3" fill="url(#g9)"/><circle cx="393.3" cy="145.4" r="2.6" fill="url(#g7)"/><circle cx="320.6" cy="334.5" r="2.3" fill="url(#g7)"/><circle cx="524.9" cy="350.3" r="2.4" fill="url(#g9)"/><circle cx="395.6" cy="186.6" r="2.6" fill="url(#g8)"/><circle cx="494.2" cy="234.7" r="4.1" fill="url(#g7)"/><circle cx="540.9" cy="290.2" r="2.7" fill="url(#g11)"/><circle cx="412.3" cy="414.9" r="2.6" fill="url(#g3)"/><circle cx="418.5" cy="375.8" r="4.7" fill="url(#g8)"/><circle cx="476.5" cy="210.5" r="2.5" fill="url(#g12)"/><circle cx="528.6" cy="254.0" r="2.9" fill="url(#g10)"/><circle cx="503.3" cy="398.2" r="2.7" fill="url(#g4)"/><circle cx="398.1" cy="266.4" r="4.7" fill="url(#g2)"/><circle cx="365.6" cy="232.7" r="4.1" fill="url(#g1)"/><circle cx="459.5" cy="194.7" r="2.7" fill="url(#g14)"/><circle cx="442.3" cy="241.8" r="2.7" fill="url(#g2)"/><circle cx="355.9" cy="381.3" r="2.3" fill="url(#g1)"/><circle cx="383.8" cy="400.6" r="2.2" fill="url(#g7)"/><circle cx="357.4" cy="332.4" r="2.3" fill="url(#g4)"/><circle cx="322.8" cy="247.8" r="2.5" fill="url(#g9)"/><circle cx="385.9" cy="175.2" r="2.8" fill="url(#g2)"/><circle cx="538.8" cy="226.8" r="3.3" fill="url(#g5)"/><circle cx="514.9" cy="226.5" r="2.2" fill="url(#g3)"/><circle cx="446.1" cy="422.0" r="2.4" fill="url(#g8)"/><circle cx="408.8" cy="375.4" r="2.5" fill="url(#g13)"/><circle cx="429.0" cy="208.3" r="3.0" fill="url(#g12)"/><circle cx="389.8" cy="281.7" r="4.8" fill="url(#g16)"/><circle cx="304.1" cy="331.4" r="3.3" fill="url(#g10)"/><circle cx="335.4" cy="235.6" r="2.5" fill="url(#g16)"/><circle cx="490.1" cy="244.0" r="3.2" fill="url(#g16)"/><circle cx="393.8" cy="154.2" r="2.3" fill="url(#g16)"/><circle cx="434.6" cy="328.0" r="2.5" fill="url(#g15)"/><circle cx="505.1" cy="313.1" r="2.3" fill="url(#g11)"/><circle cx="517.8" cy="234.1" r="2.9" fill="url(#g12)"/><circle cx="344.2" cy="185.3" r="2.6" fill="url(#g7)"/><circle cx="404.5" cy="183.8" r="2.5" fill="url(#g4)"/><circle cx="323.6" cy="330.8" r="2.7" fill="url(#g3)"/><circle cx="399.5" cy="209.6" r="3.7" fill="url(#g7)"/><circle cx="484.0" cy="247.9" r="2.8" fill="url(#g15)"/><circle cx="399.1" cy="122.0" r="2.6" fill="url(#g5)"/><circle cx="333.8" cy="332.5" r="2.6" fill="url(#g10)"/><circle cx="492.9" cy="381.5" r="2.7" fill="url(#g6)"/><circle cx="466.5" cy="355.4" r="3.4" fill="url(#g1)"/><circle cx="445.2" cy="153.4" r="2.4" fill="url(#g15)"/><circle cx="474.7" cy="200.9" r="2.6" fill="url(#g7)"/><circle cx="291.7" cy="302.2" r="3.2" fill="url(#g10)"/><circle cx="404.8" cy="226.4" r="2.5" fill="url(#g9)"/><circle cx="453.6" cy="303.8" r="2.5" fill="url(#g1)"/><circle cx="487.0" cy="343.3" r="2.5" fill="url(#g3)"/><circle cx="313.2" cy="238.3" r="2.3" fill="url(#g4)"/><circle cx="301.0" cy="323.5" r="2.6" fill="url(#g10)"/><circle cx="534.9" cy="263.1" r="2.7" fill="url(#g1)"/><circle cx="509.2" cy="368.8" r="2.8" fill="url(#g12)"/><circle cx="406.2" cy="207.6" r="2.8" fill="url(#g7)"/><circle cx="407.2" cy="223.8" r="2.5" fill="url(#g13)"/><circle cx="365.3" cy="311.7" r="2.7" fill="url(#g4)"/><circle cx="429.6" cy="321.5" r="2.6" fill="url(#g5)"/><circle cx="372.2" cy="323.6" r="2.3" fill="url(#g14)"/><circle cx="459.6" cy="346.6" r="4.1" fill="url(#g0)"/><circle cx="388.2" cy="413.9" r="2.6" fill="url(#g9)"/><circle cx="319.5" cy="243.2" r="2.3" fill="url(#g3)"/><circle cx="432.7" cy="201.4" r="2.7" fill="url(#g12)"/><circle cx="542.0" cy="250.7" r="2.7" fill="url(#g0)"/><circle cx="538.1" cy="304.8" r="3.0" fill="url(#g6)"/><circle cx="427.3" cy="224.5" r="2.4" fill="url(#g6)"/><circle cx="453.0" cy="410.5" r="2.2" fill="url(#g4)"/><circle cx="316.4" cy="240.6" r="3.0" fill="url(#g12)"/><circle cx="325.6" cy="384.0" r="2.5" fill="url(#g6)"/><circle cx="414.2" cy="314.6" r="2.4" fill="url(#g0)"/><circle cx="328.1" cy="136.4" r="2.8" fill="url(#g15)"/><circle cx="339.9" cy="185.6" r="2.6" fill="url(#g7)"/><circle cx="306.8" cy="301.5" r="2.4" fill="url(#g13)"/><circle cx="470.1" cy="161.3" r="3.3" fill="url(#g7)"/><circle cx="315.8" cy="186.1" r="2.6" fill="url(#g10)"/><circle cx="412.2" cy="333.9" r="2.4" fill="url(#g12)"/><circle cx="327.0" cy="157.9" r="2.8" fill="url(#g5)"/><circle cx="378.6" cy="335.8" r="2.4" fill="url(#g10)"/><circle cx="396.9" cy="317.5" r="2.6" fill="url(#g8)"/><circle cx="422.8" cy="190.7" r="2.6" fill="url(#g8)"/><circle cx="443.2" cy="254.9" r="2.3" fill="url(#g4)"/><circle cx="407.4" cy="374.6" r="2.5" fill="url(#g5)"/><circle cx="359.4" cy="222.5" r="2.4" fill="url(#g9)"/><circle cx="477.5" cy="198.2" r="2.5" fill="url(#g4)"/><circle cx="431.6" cy="362.0" r="2.4" fill="url(#g16)"/><circle cx="453.9" cy="244.0" r="2.5" fill="url(#g1)"/><circle cx="436.4" cy="151.1" r="2.7" fill="url(#g12)"/><circle cx="523.5" cy="314.9" r="2.6" fill="url(#g12)"/><circle cx="307.9" cy="278.6" r="2.8" fill="url(#g4)"/><circle cx="460.5" cy="244.2" r="3.3" fill="url(#g6)"/><circle cx="376.7" cy="309.4" r="2.3" fill="url(#g12)"/><circle cx="338.7" cy="271.1" r="2.8" fill="url(#g7)"/><circle cx="515.1" cy="367.6" r="2.7" fill="url(#g6)"/><circle cx="373.5" cy="302.2" r="2.5" fill="url(#g9)"/><circle cx="448.8" cy="388.1" r="3.0" fill="url(#g0)"/><circle cx="442.3" cy="275.1" r="2.2" fill="url(#g8)"/><circle cx="444.8" cy="261.5" r="2.7" fill="url(#g2)"/><circle cx="473.9" cy="257.6" r="3.5" fill="url(#g16)"/><circle cx="334.9" cy="244.5" r="4.3" fill="url(#g8)"/><circle cx="454.9" cy="239.2" r="2.6" fill="url(#g9)"/><circle cx="469.6" cy="345.7" r="3.5" fill="url(#g6)"/><circle cx="449.7" cy="405.0" r="2.6" fill="url(#g5)"/><circle cx="349.8" cy="243.7" r="3.2" fill="url(#g2)"/><circle cx="381.9" cy="364.0" r="5.3" fill="url(#g11)"/><circle cx="387.4" cy="368.2" r="2.5" fill="url(#g10)"/><circle cx="427.2" cy="139.4" r="2.4" fill="url(#g13)"/><circle cx="351.1" cy="140.2" r="2.2" fill="url(#g2)"/><circle cx="434.9" cy="134.2" r="2.7" fill="url(#g9)"/><circle cx="469.0" cy="209.5" r="2.4" fill="url(#g9)"/><circle cx="495.6" cy="284.7" r="2.9" fill="url(#g11)"/><circle cx="436.6" cy="376.3" r="2.7" fill="url(#g13)"/><circle cx="381.9" cy="140.1" r="2.4" fill="url(#g6)"/><circle cx="396.1" cy="336.9" r="2.7" fill="url(#g6)"/><circle cx="490.9" cy="359.7" r="3.2" fill="url(#g9)"/><circle cx="324.8" cy="368.0" r="2.6" fill="url(#g12)"/><circle cx="350.0" cy="368.5" r="2.5" fill="url(#g14)"/><circle cx="353.7" cy="332.6" r="2.4" fill="url(#g7)"/><circle cx="510.5" cy="256.8" r="2.3" fill="url(#g2)"/><circle cx="515.0" cy="355.5" r="3.0" fill="url(#g2)"/><circle cx="386.3" cy="328.7" r="2.3" fill="url(#g0)"/><circle cx="506.4" cy="334.4" r="2.6" fill="url(#g7)"/><circle cx="383.4" cy="183.7" r="2.7" fill="url(#g6)"/><circle cx="374.7" cy="330.3" r="3.5" fill="url(#g15)"/><circle cx="544.5" cy="263.3" r="2.5" fill="url(#g8)"/><circle cx="410.0" cy="379.5" r="2.6" fill="url(#g8)"/><circle cx="389.6" cy="120.0" r="2.7" fill="url(#g10)"/><circle cx="430.9" cy="342.1" r="2.6" fill="url(#g3)"/><circle cx="446.6" cy="313.4" r="3.3" fill="url(#g8)"/><circle cx="388.1" cy="233.7" r="2.3" fill="url(#g11)"/><circle cx="364.7" cy="243.3" r="2.3" fill="url(#g9)"/><circle cx="481.0" cy="244.0" r="2.4" fill="url(#g0)"/><circle cx="428.1" cy="337.5" r="2.8" fill="url(#g4)"/><circle cx="408.9" cy="120.4" r="2.6" fill="url(#g13)"/><circle cx="359.5" cy="325.9" r="3.3" fill="url(#g9)"/><circle cx="367.9" cy="348.5" r="3.0" fill="url(#g4)"/><circle cx="313.1" cy="317.7" r="2.8" fill="url(#g14)"/><circle cx="531.2" cy="370.1" r="3.4" fill="url(#g13)"/><circle cx="317.7" cy="348.9" r="2.5" fill="url(#g11)"/><circle cx="384.0" cy="130.0" r="2.6" fill="url(#g13)"/><circle cx="462.5" cy="388.6" r="3.4" fill="url(#g6)"/><circle cx="514.2" cy="265.9" r="2.2" fill="url(#g2)"/><circle cx="407.7" cy="330.8" r="2.4" fill="url(#g8)"/><circle cx="316.5" cy="358.4" r="3.4" fill="url(#g11)"/><circle cx="466.1" cy="295.8" r="2.5" fill="url(#g15)"/><circle cx="394.3" cy="204.0" r="2.4" fill="url(#g6)"/><circle cx="393.3" cy="196.9" r="2.7" fill="url(#g9)"/><circle cx="424.6" cy="140.4" r="2.7" fill="url(#g5)"/><circle cx="361.8" cy="343.1" r="2.7" fill="url(#g5)"/><circle cx="396.0" cy="323.5" r="2.7" fill="url(#g0)"/><circle cx="403.5" cy="251.6" r="2.8" fill="url(#g4)"/><circle cx="348.1" cy="383.0" r="2.4" fill="url(#g14)"/><circle cx="501.8" cy="366.5" r="2.8" fill="url(#g11)"/><circle cx="357.5" cy="350.3" r="2.5" fill="url(#g6)"/><circle cx="323.3" cy="220.4" r="2.5" fill="url(#g12)"/><circle cx="433.9" cy="334.9" r="2.7" fill="url(#g7)"/><circle cx="381.6" cy="160.0" r="3.0" fill="url(#g7)"/><circle cx="298.2" cy="228.7" r="2.8" fill="url(#g15)"/><circle cx="401.1" cy="246.3" r="2.4" fill="url(#g3)"/><circle cx="311.8" cy="305.3" r="2.3" fill="url(#g15)"/><circle cx="374.9" cy="417.5" r="2.7" fill="url(#g15)"/><circle cx="471.0" cy="187.8" r="2.4" fill="url(#g13)"/><circle cx="455.4" cy="231.5" r="2.8" fill="url(#g8)"/><circle cx="480.6" cy="358.5" r="3.4" fill="url(#g6)"/><circle cx="497.2" cy="270.0" r="2.5" fill="url(#g9)"/><circle cx="477.5" cy="324.4" r="3.1" fill="url(#g10)"/><circle cx="372.8" cy="318.4" r="2.8" fill="url(#g14)"/><circle cx="366.6" cy="220.8" r="2.2" fill="url(#g6)"/><circle cx="467.0" cy="177.1" r="3.0" fill="url(#g14)"/><circle cx="395.9" cy="353.5" r="2.9" fill="url(#g3)"/><circle cx="424.4" cy="184.7" r="2.6" fill="url(#g5)"/><circle cx="439.5" cy="423.9" r="2.3" fill="url(#g8)"/><circle cx="544.0" cy="234.3" r="2.8" fill="url(#g11)"/><circle cx="388.5" cy="144.3" r="2.6" fill="url(#g6)"/><circle cx="381.8" cy="219.1" r="2.3" fill="url(#g2)"/><circle cx="514.8" cy="197.5" r="2.3" fill="url(#g15)"/><circle cx="385.3" cy="158.6" r="2.4" fill="url(#g4)"/><circle cx="465.7" cy="245.5" r="3.6" fill="url(#g9)"/><circle cx="549.2" cy="331.3" r="2.4" fill="url(#g11)"/><circle cx="459.2" cy="233.0" r="2.7" fill="url(#g6)"/><circle cx="511.5" cy="363.8" r="2.9" fill="url(#g14)"/><circle cx="299.8" cy="265.0" r="3.4" fill="url(#g7)"/><circle cx="462.2" cy="419.8" r="2.6" fill="url(#g11)"/><circle cx="462.9" cy="341.2" r="3.0" fill="url(#g15)"/><circle cx="324.9" cy="341.6" r="2.7" fill="url(#g12)"/><circle cx="366.3" cy="345.4" r="3.2" fill="url(#g13)"/><circle cx="297.7" cy="182.8" r="2.6" fill="url(#g5)"/><circle cx="331.1" cy="300.0" r="2.8" fill="url(#g7)"/><circle cx="465.7" cy="361.4" r="2.7" fill="url(#g9)"/><circle cx="417.1" cy="273.2" r="2.3" fill="url(#g8)"/><circle cx="459.8" cy="307.6" r="2.8" fill="url(#g13)"/><circle cx="317.5" cy="194.3" r="3.8" fill="url(#g4)"/><circle cx="407.7" cy="180.6" r="2.7" fill="url(#g1)"/><circle cx="423.0" cy="253.7" r="2.6" fill="url(#g9)"/><circle cx="400.3" cy="261.3" r="2.2" fill="url(#g4)"/><circle cx="535.2" cy="308.2" r="3.3" fill="url(#g13)"/><circle cx="507.9" cy="239.7" r="2.2" fill="url(#g5)"/><circle cx="516.6" cy="222.8" r="2.6" fill="url(#g0)"/><circle cx="466.5" cy="290.6" r="3.3" fill="url(#g5)"/><circle cx="408.1" cy="358.6" r="2.4" fill="url(#g2)"/><circle cx="370.9" cy="169.4" r="4.4" fill="url(#g2)"/><circle cx="378.2" cy="408.5" r="2.3" fill="url(#g11)"/><circle cx="327.1" cy="203.4" r="3.2" fill="url(#g13)"/><circle cx="453.2" cy="403.9" r="2.3" fill="url(#g8)"/><circle cx="466.9" cy="280.4" r="2.6" fill="url(#g1)"/><circle cx="407.8" cy="279.4" r="3.0" fill="url(#g5)"/><circle cx="423.9" cy="302.4" r="2.5" fill="url(#g6)"/><circle cx="384.2" cy="163.0" r="2.9" fill="url(#g2)"/><circle cx="509.7" cy="390.4" r="2.8" fill="url(#g12)"/><circle cx="439.3" cy="385.3" r="2.3" fill="url(#g8)"/><circle cx="325.2" cy="196.2" r="3.0" fill="url(#g2)"/><circle cx="307.9" cy="209.8" r="2.8" fill="url(#g10)"/><circle cx="292.6" cy="268.9" r="2.4" fill="url(#g6)"/><circle cx="288.9" cy="296.0" r="2.5" fill="url(#g6)"/><circle cx="393.6" cy="159.7" r="2.4" fill="url(#g0)"/><circle cx="419.3" cy="126.9" r="3.0" fill="url(#g11)"/><circle cx="454.0" cy="393.9" r="2.6" fill="url(#g3)"/><circle cx="398.3" cy="341.8" r="3.3" fill="url(#g0)"/><circle cx="450.6" cy="259.2" r="3.5" fill="url(#g12)"/><circle cx="357.7" cy="342.1" r="3.6" fill="url(#g4)"/><circle cx="529.7" cy="302.2" r="2.6" fill="url(#g9)"/><circle cx="345.5" cy="389.4" r="2.3" fill="url(#g8)"/><circle cx="311.0" cy="275.9" r="2.5" fill="url(#g4)"/><circle cx="404.6" cy="120.9" r="2.3" fill="url(#g14)"/><circle cx="449.9" cy="235.3" r="2.2" fill="url(#g10)"/><circle cx="516.4" cy="236.1" r="2.6" fill="url(#g16)"/><circle cx="345.2" cy="373.6" r="2.7" fill="url(#g6)"/><circle cx="402.5" cy="361.4" r="2.8" fill="url(#g7)"/><circle cx="319.2" cy="349.5" r="2.7" fill="url(#g2)"/><circle cx="380.6" cy="117.6" r="2.6" fill="url(#g12)"/><circle cx="374.5" cy="144.3" r="2.6" fill="url(#g7)"/><circle cx="438.6" cy="172.6" r="2.5" fill="url(#g14)"/><circle cx="455.6" cy="170.8" r="2.4" fill="url(#g4)"/><circle cx="465.1" cy="215.3" r="2.3" fill="url(#g8)"/><circle cx="451.8" cy="347.2" r="2.7" fill="url(#g9)"/><circle cx="505.2" cy="379.7" r="2.7" fill="url(#g11)"/><circle cx="369.9" cy="389.1" r="3.3" fill="url(#g2)"/><circle cx="376.0" cy="316.9" r="2.4" fill="url(#g9)"/><circle cx="482.2" cy="247.3" r="4.4" fill="url(#g4)"/><circle cx="382.8" cy="225.8" r="2.4" fill="url(#g14)"/><circle cx="530.8" cy="241.8" r="2.7" fill="url(#g3)"/><circle cx="525.7" cy="247.9" r="2.7" fill="url(#g2)"/><circle cx="369.1" cy="120.1" r="2.8" fill="url(#g4)"/><circle cx="339.6" cy="253.8" r="2.3" fill="url(#g4)"/><circle cx="288.0" cy="224.8" r="2.6" fill="url(#g2)"/><circle cx="425.2" cy="214.8" r="2.8" fill="url(#g5)"/><circle cx="406.6" cy="416.1" r="2.6" fill="url(#g6)"/><circle cx="409.8" cy="315.6" r="2.7" fill="url(#g7)"/><circle cx="318.6" cy="236.1" r="2.3" fill="url(#g3)"/><circle cx="355.8" cy="204.5" r="3.4" fill="url(#g2)"/><circle cx="337.2" cy="153.6" r="2.5" fill="url(#g10)"/><circle cx="436.8" cy="269.0" r="2.3" fill="url(#g8)"/><circle cx="447.2" cy="187.3" r="3.2" fill="url(#g7)"/><circle cx="359.1" cy="169.6" r="2.4" fill="url(#g16)"/><circle cx="479.9" cy="334.1" r="2.4" fill="url(#g7)"/><circle cx="482.1" cy="258.0" r="2.8" fill="url(#g4)"/><circle cx="479.8" cy="201.8" r="3.2" fill="url(#g5)"/><circle cx="476.6" cy="389.3" r="3.2" fill="url(#g6)"/><circle cx="468.8" cy="239.6" r="2.6" fill="url(#g10)"/><circle cx="376.5" cy="123.7" r="2.6" fill="url(#g3)"/><circle cx="480.8" cy="180.9" r="2.4" fill="url(#g7)"/><circle cx="487.7" cy="183.6" r="2.3" fill="url(#g9)"/><circle cx="299.0" cy="249.6" r="2.5" fill="url(#g14)"/><circle cx="380.5" cy="278.5" r="2.5" fill="url(#g11)"/><circle cx="386.6" cy="236.6" r="2.3" fill="url(#g3)"/><circle cx="348.6" cy="238.8" r="2.2" fill="url(#g4)"/><circle cx="409.2" cy="340.7" r="2.4" fill="url(#g12)"/><circle cx="552.5" cy="271.2" r="3.0" fill="url(#g5)"/><circle cx="302.7" cy="169.5" r="2.5" fill="url(#g15)"/><circle cx="394.9" cy="211.9" r="2.2" fill="url(#g1)"/><circle cx="364.8" cy="270.5" r="3.5" fill="url(#g5)"/><circle cx="405.5" cy="359.3" r="2.8" fill="url(#g1)"/><circle cx="292.7" cy="178.4" r="2.7" fill="url(#g6)"/><circle cx="398.4" cy="169.1" r="2.6" fill="url(#g4)"/><circle cx="425.5" cy="246.7" r="2.2" fill="url(#g7)"/><circle cx="325.8" cy="361.5" r="2.6" fill="url(#g5)"/><circle cx="390.1" cy="177.4" r="2.3" fill="url(#g8)"/><circle cx="371.2" cy="180.0" r="3.2" fill="url(#g13)"/><circle cx="443.5" cy="402.8" r="2.4" fill="url(#g9)"/><circle cx="487.6" cy="304.3" r="3.1" fill="url(#g16)"/><circle cx="382.7" cy="195.1" r="3.0" fill="url(#g3)"/><circle cx="376.4" cy="373.5" r="2.6" fill="url(#g13)"/><circle cx="519.4" cy="246.3" r="2.7" fill="url(#g15)"/><circle cx="453.4" cy="293.2" r="3.1" fill="url(#g3)"/><circle cx="371.6" cy="250.7" r="2.5" fill="url(#g14)"/><circle cx="376.0" cy="323.5" r="2.6" fill="url(#g6)"/><circle cx="389.3" cy="363.6" r="2.5" fill="url(#g12)"/><circle cx="501.8" cy="259.9" r="2.4" fill="url(#g11)"/><circle cx="363.6" cy="281.0" r="2.6" fill="url(#g5)"/><circle cx="425.2" cy="248.2" r="2.4" fill="url(#g10)"/><circle cx="431.7" cy="180.8" r="5.7" fill="url(#g6)"/><circle cx="447.1" cy="361.3" r="3.2" fill="url(#g12)"/><circle cx="331.2" cy="306.1" r="2.9" fill="url(#g12)"/><circle cx="401.6" cy="271.3" r="2.5" fill="url(#g11)"/><circle cx="427.6" cy="235.9" r="2.5" fill="url(#g14)"/><circle cx="341.9" cy="223.2" r="3.5" fill="url(#g14)"/><circle cx="368.8" cy="303.8" r="2.4" fill="url(#g9)"/><circle cx="405.1" cy="392.6" r="2.9" fill="url(#g3)"/><circle cx="474.0" cy="245.6" r="2.6" fill="url(#g5)"/><circle cx="459.7" cy="295.9" r="2.8" fill="url(#g1)"/><circle cx="345.8" cy="268.9" r="2.2" fill="url(#g15)"/><circle cx="300.1" cy="276.4" r="2.3" fill="url(#g15)"/><circle cx="482.7" cy="228.9" r="2.7" fill="url(#g6)"/><circle cx="322.1" cy="224.5" r="2.4" fill="url(#g13)"/><circle cx="397.6" cy="374.3" r="2.5" fill="url(#g16)"/><circle cx="540.7" cy="355.3" r="2.5" fill="url(#g15)"/><circle cx="389.5" cy="141.2" r="3.2" fill="url(#g9)"/><circle cx="497.7" cy="305.5" r="2.2" fill="url(#g15)"/><circle cx="522.8" cy="322.9" r="2.5" fill="url(#g5)"/><circle cx="395.7" cy="197.1" r="2.2" fill="url(#g11)"/><circle cx="503.7" cy="201.4" r="2.3" fill="url(#g5)"/><circle cx="458.6" cy="219.6" r="2.7" fill="url(#g5)"/><circle cx="475.8" cy="414.4" r="2.7" fill="url(#g7)"/><circle cx="416.4" cy="246.0" r="2.6" fill="url(#g6)"/><circle cx="444.4" cy="383.2" r="2.2" fill="url(#g12)"/><circle cx="389.7" cy="250.0" r="2.6" fill="url(#g8)"/><circle cx="463.2" cy="348.5" r="2.5" fill="url(#g14)"/><circle cx="362.3" cy="241.2" r="2.8" fill="url(#g13)"/><circle cx="456.6" cy="319.7" r="2.7" fill="url(#g8)"/><circle cx="379.6" cy="350.6" r="2.6" fill="url(#g3)"/><circle cx="509.1" cy="246.2" r="3.5" fill="url(#g0)"/><circle cx="305.7" cy="289.8" r="2.8" fill="url(#g2)"/><circle cx="401.3" cy="314.5" r="2.9" fill="url(#g11)"/><circle cx="317.6" cy="200.1" r="2.3" fill="url(#g10)"/><circle cx="343.4" cy="162.4" r="2.8" fill="url(#g11)"/><circle cx="370.3" cy="339.0" r="2.7" fill="url(#g16)"/><circle cx="494.3" cy="169.0" r="2.6" fill="url(#g16)"/><circle cx="389.4" cy="359.0" r="2.2" fill="url(#g2)"/><circle cx="446.3" cy="290.9" r="2.6" fill="url(#g6)"/><circle cx="360.9" cy="347.6" r="3.3" fill="url(#g13)"/><circle cx="485.0" cy="174.6" r="2.6" fill="url(#g0)"/><circle cx="430.3" cy="395.0" r="2.7" fill="url(#g3)"/><circle cx="530.9" cy="385.4" r="2.3" fill="url(#g16)"/><circle cx="353.5" cy="387.6" r="3.0" fill="url(#g4)"/><circle cx="333.7" cy="250.9" r="4.0" fill="url(#g5)"/><circle cx="347.7" cy="349.2" r="2.4" fill="url(#g3)"/><circle cx="502.9" cy="266.1" r="2.7" fill="url(#g13)"/><circle cx="510.5" cy="179.8" r="2.6" fill="url(#g5)"/><circle cx="357.4" cy="280.6" r="2.5" fill="url(#g9)"/><circle cx="341.8" cy="275.5" r="4.1" fill="url(#g12)"/><circle cx="501.3" cy="246.7" r="3.8" fill="url(#g3)"/><circle cx="496.0" cy="244.5" r="3.1" fill="url(#g11)"/><circle cx="283.6" cy="272.5" r="2.6" fill="url(#g7)"/><circle cx="398.3" cy="135.1" r="2.2" fill="url(#g5)"/><circle cx="532.0" cy="355.3" r="3.2" fill="url(#g11)"/><circle cx="300.4" cy="312.9" r="2.5" fill="url(#g10)"/><circle cx="474.8" cy="173.7" r="2.8" fill="url(#g5)"/><circle cx="413.8" cy="340.5" r="2.3" fill="url(#g14)"/><circle cx="459.1" cy="355.2" r="3.7" fill="url(#g14)"/><circle cx="362.7" cy="221.9" r="2.5" fill="url(#g4)"/><circle cx="500.3" cy="344.3" r="2.4" fill="url(#g13)"/><circle cx="341.6" cy="173.0" r="2.4" fill="url(#g4)"/><circle cx="321.5" cy="298.3" r="2.3" fill="url(#g9)"/><circle cx="491.5" cy="286.1" r="3.2" fill="url(#g6)"/><circle cx="516.9" cy="307.9" r="2.7" fill="url(#g14)"/><circle cx="372.6" cy="373.9" r="2.4" fill="url(#g3)"/><circle cx="423.6" cy="392.9" r="3.1" fill="url(#g4)"/><circle cx="426.5" cy="286.2" r="3.2" fill="url(#g10)"/><circle cx="394.6" cy="332.6" r="3.6" fill="url(#g14)"/><circle cx="542.5" cy="346.3" r="2.5" fill="url(#g9)"/><circle cx="482.8" cy="406.1" r="3.2" fill="url(#g5)"/><circle cx="411.4" cy="303.7" r="2.3" fill="url(#g1)"/><circle cx="431.8" cy="310.7" r="3.2" fill="url(#g7)"/><circle cx="332.4" cy="388.7" r="3.1" fill="url(#g4)"/><circle cx="384.2" cy="207.4" r="2.5" fill="url(#g4)"/><circle cx="478.8" cy="154.7" r="2.6" fill="url(#g15)"/><circle cx="495.2" cy="266.6" r="2.4" fill="url(#g7)"/><circle cx="333.4" cy="169.2" r="3.2" fill="url(#g8)"/><circle cx="521.5" cy="379.1" r="2.2" fill="url(#g10)"/><circle cx="491.1" cy="270.0" r="2.4" fill="url(#g15)"/><circle cx="415.6" cy="407.4" r="2.7" fill="url(#g6)"/><circle cx="404.6" cy="334.7" r="2.3" fill="url(#g8)"/><circle cx="337.0" cy="335.7" r="2.6" fill="url(#g10)"/><circle cx="450.2" cy="175.8" r="4.6" fill="url(#g6)"/><circle cx="432.1" cy="384.6" r="2.3" fill="url(#g5)"/><circle cx="350.7" cy="332.7" r="2.7" fill="url(#g1)"/><circle cx="392.5" cy="290.9" r="2.6" fill="url(#g6)"/><circle cx="418.5" cy="343.5" r="2.9" fill="url(#g2)"/><circle cx="456.9" cy="300.7" r="3.1" fill="url(#g4)"/><circle cx="347.2" cy="295.3" r="2.7" fill="url(#g10)"/><circle cx="405.6" cy="320.5" r="2.2" fill="url(#g4)"/><circle cx="310.4" cy="215.6" r="3.6" fill="url(#g14)"/><circle cx="462.0" cy="142.3" r="2.3" fill="url(#g14)"/><circle cx="391.1" cy="225.7" r="2.7" fill="url(#g9)"/><circle cx="352.9" cy="157.3" r="2.5" fill="url(#g5)"/><circle cx="387.0" cy="134.0" r="2.3" fill="url(#g10)"/><circle cx="291.6" cy="233.8" r="2.6" fill="url(#g14)"/><circle cx="482.7" cy="178.7" r="3.3" fill="url(#g5)"/><circle cx="296.0" cy="165.9" r="3.0" fill="url(#g2)"/><circle cx="350.8" cy="346.9" r="2.3" fill="url(#g6)"/><circle cx="519.1" cy="356.2" r="2.3" fill="url(#g7)"/><circle cx="489.0" cy="298.2" r="2.9" fill="url(#g4)"/><circle cx="508.8" cy="330.4" r="2.3" fill="url(#g4)"/><circle cx="525.5" cy="337.4" r="3.2" fill="url(#g16)"/><circle cx="463.3" cy="265.2" r="2.4" fill="url(#g7)"/><circle cx="291.0" cy="302.8" r="2.5" fill="url(#g0)"/><circle cx="447.0" cy="342.6" r="2.5" fill="url(#g13)"/><circle cx="459.5" cy="213.4" r="2.6" fill="url(#g5)"/><circle cx="359.4" cy="367.4" r="2.5" fill="url(#g5)"/><circle cx="392.9" cy="381.0" r="2.4" fill="url(#g14)"/><circle cx="521.4" cy="347.2" r="2.6" fill="url(#g5)"/><circle cx="339.2" cy="232.2" r="2.6" fill="url(#g12)"/><circle cx="500.6" cy="276.8" r="3.7" fill="url(#g14)"/><circle cx="488.1" cy="156.8" r="2.8" fill="url(#g7)"/><circle cx="440.4" cy="310.2" r="2.8" fill="url(#g7)"/><circle cx="430.9" cy="390.8" r="2.2" fill="url(#g13)"/><circle cx="423.2" cy="276.9" r="2.6" fill="url(#g8)"/><circle cx="299.7" cy="294.9" r="2.4" fill="url(#g13)"/><circle cx="371.2" cy="283.2" r="2.6" fill="url(#g7)"/><circle cx="412.1" cy="388.3" r="3.0" fill="url(#g6)"/><circle cx="521.2" cy="264.1" r="2.3" fill="url(#g13)"/><circle cx="522.6" cy="212.1" r="2.6" fill="url(#g9)"/><circle cx="468.6" cy="149.6" r="2.4" fill="url(#g5)"/><circle cx="467.1" cy="377.0" r="2.7" fill="url(#g9)"/><circle cx="402.6" cy="377.8" r="2.4" fill="url(#g2)"/><circle cx="396.5" cy="289.4" r="2.4" fill="url(#g8)"/><circle cx="419.0" cy="256.3" r="3.2" fill="url(#g11)"/><circle cx="415.8" cy="223.6" r="2.5" fill="url(#g2)"/><circle cx="440.2" cy="373.6" r="3.3" fill="url(#g4)"/><circle cx="447.3" cy="180.2" r="2.2" fill="url(#g7)"/><circle cx="499.8" cy="387.8" r="2.6" fill="url(#g0)"/><circle cx="484.8" cy="316.3" r="4.2" fill="url(#g3)"/><circle cx="460.2" cy="396.4" r="3.0" fill="url(#g7)"/><circle cx="370.8" cy="300.0" r="2.3" fill="url(#g6)"/><circle cx="310.4" cy="134.3" r="2.2" fill="url(#g15)"/><circle cx="409.5" cy="255.3" r="2.2" fill="url(#g12)"/><circle cx="396.5" cy="141.0" r="2.4" fill="url(#g1)"/><circle cx="344.4" cy="285.9" r="2.3" fill="url(#g0)"/><circle cx="338.5" cy="395.2" r="2.4" fill="url(#g7)"/><circle cx="410.8" cy="221.7" r="3.1" fill="url(#g13)"/><circle cx="354.5" cy="159.9" r="2.5" fill="url(#g12)"/><circle cx="322.9" cy="316.4" r="2.7" fill="url(#g14)"/><circle cx="374.8" cy="260.1" r="2.2" fill="url(#g13)"/><circle cx="391.9" cy="259.7" r="3.9" fill="url(#g7)"/><circle cx="377.4" cy="235.4" r="2.8" fill="url(#g9)"/><circle cx="478.6" cy="226.8" r="2.4" fill="url(#g10)"/><circle cx="371.1" cy="230.2" r="2.3" fill="url(#g7)"/><circle cx="436.1" cy="108.1" r="2.2" fill="url(#g0)"/><circle cx="404.9" cy="305.1" r="2.6" fill="url(#g13)"/><circle cx="400.1" cy="428.9" r="2.4" fill="url(#g6)"/><circle cx="351.2" cy="282.1" r="2.8" fill="url(#g15)"/><circle cx="406.0" cy="264.6" r="2.6" fill="url(#g14)"/><circle cx="462.9" cy="217.9" r="3.6" fill="url(#g5)"/><circle cx="459.9" cy="332.7" r="2.5" fill="url(#g5)"/><circle cx="380.4" cy="150.1" r="2.8" fill="url(#g6)"/><circle cx="465.4" cy="336.9" r="2.2" fill="url(#g15)"/><circle cx="410.5" cy="250.8" r="2.7" fill="url(#g5)"/><circle cx="474.4" cy="349.4" r="3.3" fill="url(#g7)"/><circle cx="525.1" cy="310.6" r="2.3" fill="url(#g6)"/><circle cx="459.5" cy="262.7" r="2.8" fill="url(#g13)"/><circle cx="522.2" cy="332.2" r="2.7" fill="url(#g10)"/><circle cx="490.1" cy="276.2" r="2.7" fill="url(#g11)"/><circle cx="325.5" cy="304.1" r="2.5" fill="url(#g6)"/><circle cx="445.4" cy="296.5" r="2.6" fill="url(#g15)"/><circle cx="431.3" cy="281.4" r="2.7" fill="url(#g13)"/><circle cx="306.7" cy="310.3" r="2.3" fill="url(#g10)"/><circle cx="488.8" cy="404.0" r="3.0" fill="url(#g7)"/><circle cx="412.2" cy="171.8" r="2.5" fill="url(#g5)"/><circle cx="352.4" cy="232.5" r="2.4" fill="url(#g9)"/><circle cx="428.6" cy="374.8" r="2.3" fill="url(#g3)"/><circle cx="515.7" cy="204.5" r="2.8" fill="url(#g14)"/><circle cx="370.5" cy="135.2" r="2.8" fill="url(#g8)"/><circle cx="441.1" cy="200.4" r="3.0" fill="url(#g6)"/><circle cx="459.3" cy="179.9" r="2.3" fill="url(#g2)"/><circle cx="453.2" cy="298.4" r="2.6" fill="url(#g2)"/><circle cx="457.2" cy="239.1" r="2.4" fill="url(#g15)"/><circle cx="454.8" cy="279.3" r="3.5" fill="url(#g7)"/><circle cx="454.1" cy="382.9" r="2.6" fill="url(#g11)"/><circle cx="511.4" cy="194.7" r="2.5" fill="url(#g2)"/><circle cx="282.2" cy="273.8" r="3.0" fill="url(#g6)"/><circle cx="292.9" cy="251.9" r="2.3" fill="url(#g9)"/><circle cx="408.6" cy="382.2" r="3.5" fill="url(#g9)"/><circle cx="529.6" cy="350.1" r="2.3" fill="url(#g14)"/><circle cx="330.4" cy="211.1" r="2.3" fill="url(#g10)"/><circle cx="484.1" cy="382.2" r="2.5" fill="url(#g1)"/><circle cx="481.8" cy="287.0" r="2.7" fill="url(#g4)"/><circle cx="540.1" cy="326.3" r="2.2" fill="url(#g8)"/><circle cx="514.4" cy="272.3" r="2.4" fill="url(#g12)"/><circle cx="354.3" cy="297.7" r="3.0" fill="url(#g6)"/><circle cx="429.0" cy="111.3" r="3.1" fill="url(#g14)"/><circle cx="437.2" cy="270.6" r="3.1" fill="url(#g14)"/><circle cx="457.0" cy="277.9" r="3.3" fill="url(#g15)"/><circle cx="449.9" cy="307.7" r="2.8" fill="url(#g7)"/><circle cx="420.3" cy="263.6" r="3.0" fill="url(#g4)"/><circle cx="439.8" cy="219.3" r="2.2" fill="url(#g13)"/><circle cx="411.1" cy="225.0" r="2.3" fill="url(#g7)"/><circle cx="323.4" cy="266.5" r="2.4" fill="url(#g7)"/><circle cx="379.4" cy="165.4" r="3.0" fill="url(#g0)"/><circle cx="511.5" cy="288.8" r="2.8" fill="url(#g7)"/><circle cx="436.2" cy="302.5" r="2.8" fill="url(#g13)"/><circle cx="359.4" cy="208.7" r="2.4" fill="url(#g7)"/><circle cx="435.2" cy="207.0" r="4.1" fill="url(#g10)"/><circle cx="348.5" cy="337.9" r="4.7" fill="url(#g8)"/><circle cx="368.0" cy="163.6" r="2.7" fill="url(#g15)"/><circle cx="393.4" cy="253.0" r="2.4" fill="url(#g13)"/><circle cx="453.0" cy="336.6" r="2.5" fill="url(#g5)"/><circle cx="449.7" cy="353.9" r="2.9" fill="url(#g10)"/><circle cx="363.4" cy="329.9" r="2.5" fill="url(#g1)"/><circle cx="323.8" cy="372.8" r="2.3" fill="url(#g0)"/><circle cx="482.0" cy="341.5" r="4.4" fill="url(#g11)"/><circle cx="475.7" cy="230.1" r="2.4" fill="url(#g5)"/><circle cx="364.4" cy="375.8" r="3.2" fill="url(#g2)"/><circle cx="310.8" cy="301.7" r="2.5" fill="url(#g9)"/><circle cx="389.3" cy="127.3" r="2.7" fill="url(#g14)"/><circle cx="297.9" cy="178.0" r="2.2" fill="url(#g7)"/><circle cx="410.0" cy="402.4" r="2.6" fill="url(#g14)"/><circle cx="514.4" cy="249.2" r="3.8" fill="url(#g16)"/><circle cx="516.2" cy="336.4" r="2.4" fill="url(#g4)"/><circle cx="374.7" cy="174.9" r="3.8" fill="url(#g16)"/><circle cx="449.4" cy="285.5" r="2.7" fill="url(#g10)"/><circle cx="444.9" cy="209.0" r="2.4" fill="url(#g16)"/><circle cx="517.1" cy="315.5" r="2.4" fill="url(#g16)"/><circle cx="465.9" cy="319.0" r="3.4" fill="url(#g5)"/><circle cx="413.8" cy="307.0" r="2.5" fill="url(#g9)"/><circle cx="537.3" cy="370.9" r="2.2" fill="url(#g13)"/><circle cx="390.9" cy="396.5" r="2.3" fill="url(#g14)"/><circle cx="529.4" cy="297.7" r="2.7" fill="url(#g4)"/><circle cx="471.7" cy="236.3" r="2.6" fill="url(#g3)"/><circle cx="421.8" cy="274.2" r="3.3" fill="url(#g13)"/><circle cx="443.2" cy="363.8" r="2.7" fill="url(#g14)"/><circle cx="549.6" cy="264.3" r="2.4" fill="url(#g6)"/><circle cx="481.8" cy="374.2" r="2.8" fill="url(#g11)"/><circle cx="394.6" cy="296.1" r="2.8" fill="url(#g6)"/><circle cx="337.7" cy="270.1" r="2.7" fill="url(#g14)"/><circle cx="363.3" cy="407.5" r="2.5" fill="url(#g14)"/><circle cx="536.8" cy="293.8" r="2.4" fill="url(#g9)"/><circle cx="412.8" cy="328.9" r="2.8" fill="url(#g7)"/><circle cx="470.9" cy="319.4" r="2.6" fill="url(#g4)"/><circle cx="475.5" cy="369.7" r="2.4" fill="url(#g16)"/><circle cx="474.4" cy="155.7" r="3.1" fill="url(#g13)"/><circle cx="452.3" cy="130.6" r="2.7" fill="url(#g2)"/><circle cx="480.0" cy="160.8" r="2.4" fill="url(#g7)"/><circle cx="391.3" cy="348.2" r="2.4" fill="url(#g4)"/><circle cx="438.5" cy="296.9" r="2.4" fill="url(#g12)"/><circle cx="432.1" cy="303.9" r="2.7" fill="url(#g14)"/><circle cx="358.6" cy="155.2" r="2.8" fill="url(#g10)"/><circle cx="440.2" cy="350.0" r="2.7" fill="url(#g15)"/><circle cx="307.1" cy="238.9" r="2.6" fill="url(#g10)"/><circle cx="418.0" cy="193.8" r="2.3" fill="url(#g11)"/><circle cx="494.6" cy="274.1" r="2.7" fill="url(#g3)"/><circle cx="432.5" cy="212.7" r="2.9" fill="url(#g7)"/><circle cx="432.2" cy="268.8" r="2.6" fill="url(#g14)"/><circle cx="454.8" cy="345.8" r="2.5" fill="url(#g8)"/><circle cx="376.6" cy="397.2" r="2.9" fill="url(#g3)"/><circle cx="393.5" cy="190.1" r="5.7" fill="url(#g10)"/><circle cx="357.5" cy="393.1" r="2.6" fill="url(#g12)"/><circle cx="524.2" cy="291.2" r="2.6" fill="url(#g7)"/><circle cx="493.3" cy="213.0" r="2.4" fill="url(#g0)"/><circle cx="346.3" cy="199.2" r="2.3" fill="url(#g6)"/><circle cx="434.8" cy="274.5" r="2.4" fill="url(#g2)"/><circle cx="428.7" cy="297.5" r="2.5" fill="url(#g7)"/><circle cx="440.3" cy="225.7" r="3.4" fill="url(#g9)"/><circle cx="497.6" cy="371.4" r="2.4" fill="url(#g14)"/><circle cx="402.9" cy="355.1" r="2.4" fill="url(#g12)"/><circle cx="403.9" cy="343.4" r="2.6" fill="url(#g5)"/><circle cx="553.9" cy="239.7" r="2.2" fill="url(#g9)"/><circle cx="362.9" cy="258.4" r="2.8" fill="url(#g6)"/><circle cx="355.8" cy="193.7" r="6.0" fill="url(#g5)"/><circle cx="327.7" cy="334.9" r="2.6" fill="url(#g14)"/><circle cx="379.5" cy="272.0" r="2.8" fill="url(#g14)"/><circle cx="503.9" cy="321.3" r="3.1" fill="url(#g6)"/><circle cx="337.4" cy="335.6" r="2.2" fill="url(#g9)"/><circle cx="400.6" cy="164.1" r="2.5" fill="url(#g14)"/><circle cx="457.8" cy="300.4" r="2.8" fill="url(#g7)"/><circle cx="430.9" cy="317.0" r="3.1" fill="url(#g16)"/><circle cx="457.6" cy="419.7" r="3.1" fill="url(#g11)"/><circle cx="474.5" cy="330.3" r="2.3" fill="url(#g9)"/><circle cx="448.1" cy="147.3" r="2.6" fill="url(#g6)"/><circle cx="300.3" cy="151.2" r="2.8" fill="url(#g7)"/><circle cx="336.8" cy="349.8" r="2.6" fill="url(#g11)"/><circle cx="396.0" cy="165.5" r="2.8" fill="url(#g6)"/><circle cx="348.9" cy="274.6" r="2.7" fill="url(#g5)"/><circle cx="385.4" cy="239.3" r="2.4" fill="url(#g7)"/><circle cx="375.4" cy="213.6" r="3.2" fill="url(#g10)"/><circle cx="424.4" cy="339.1" r="2.3" fill="url(#g9)"/><circle cx="383.1" cy="147.6" r="2.5" fill="url(#g12)"/><circle cx="469.1" cy="220.0" r="4.3" fill="url(#g9)"/><circle cx="357.7" cy="151.5" r="2.2" fill="url(#g7)"/><circle cx="446.3" cy="320.6" r="2.7" fill="url(#g8)"/><circle cx="327.7" cy="174.7" r="2.4" fill="url(#g0)"/><circle cx="364.4" cy="370.7" r="2.4" fill="url(#g11)"/><circle cx="423.2" cy="295.2" r="2.2" fill="url(#g6)"/><circle cx="407.7" cy="428.4" r="2.4" fill="url(#g9)"/><circle cx="362.0" cy="411.6" r="3.0" fill="url(#g5)"/><circle cx="419.6" cy="414.9" r="2.5" fill="url(#g8)"/><circle cx="460.3" cy="140.5" r="2.6" fill="url(#g2)"/><circle cx="467.9" cy="257.5" r="2.7" fill="url(#g8)"/><circle cx="413.9" cy="283.1" r="2.4" fill="url(#g12)"/><circle cx="498.5" cy="362.6" r="4.1" fill="url(#g7)"/><circle cx="453.9" cy="170.0" r="3.4" fill="url(#g3)"/><circle cx="326.8" cy="220.6" r="2.9" fill="url(#g14)"/><circle cx="375.2" cy="280.7" r="2.6" fill="url(#g3)"/><circle cx="370.7" cy="130.2" r="2.7" fill="url(#g3)"/><circle cx="544.2" cy="336.9" r="2.4" fill="url(#g7)"/><circle cx="475.4" cy="193.4" r="2.7" fill="url(#g10)"/><circle cx="360.4" cy="227.1" r="2.4" fill="url(#g7)"/><circle cx="430.8" cy="203.2" r="4.7" fill="url(#g1)"/><circle cx="511.6" cy="208.1" r="2.6" fill="url(#g11)"/><circle cx="348.0" cy="313.9" r="2.3" fill="url(#g9)"/><circle cx="455.4" cy="258.2" r="2.7" fill="url(#g4)"/><circle cx="325.8" cy="349.8" r="2.8" fill="url(#g6)"/><circle cx="503.3" cy="206.2" r="2.4" fill="url(#g6)"/><circle cx="463.6" cy="265.0" r="2.7" fill="url(#g7)"/><circle cx="363.8" cy="238.9" r="2.8" fill="url(#g15)"/><circle cx="287.7" cy="245.3" r="2.4" fill="url(#g8)"/><circle cx="546.5" cy="358.0" r="2.9" fill="url(#g15)"/><circle cx="398.6" cy="322.0" r="5.2" fill="url(#g4)"/><circle cx="339.5" cy="378.5" r="2.8" fill="url(#g0)"/><circle cx="302.1" cy="234.8" r="2.4" fill="url(#g11)"/><circle cx="464.2" cy="410.9" r="2.7" fill="url(#g3)"/><circle cx="430.3" cy="318.1" r="2.7" fill="url(#g12)"/><circle cx="439.2" cy="374.9" r="2.5" fill="url(#g8)"/><circle cx="368.4" cy="408.1" r="3.2" fill="url(#g1)"/><circle cx="490.1" cy="265.0" r="2.5" fill="url(#g5)"/><circle cx="421.3" cy="340.8" r="2.5" fill="url(#g10)"/><circle cx="416.4" cy="153.0" r="2.5" fill="url(#g9)"/><circle cx="343.8" cy="323.2" r="2.8" fill="url(#g4)"/><circle cx="343.9" cy="205.1" r="2.3" fill="url(#g15)"/><circle cx="418.7" cy="435.2" r="2.2" fill="url(#g9)"/><circle cx="446.4" cy="293.2" r="2.8" fill="url(#g10)"/><circle cx="345.4" cy="208.7" r="2.2" fill="url(#g5)"/><circle cx="416.0" cy="352.8" r="2.2" fill="url(#g10)"/><circle cx="380.8" cy="176.5" r="2.2" fill="url(#g1)"/><circle cx="368.7" cy="346.8" r="3.7" fill="url(#g15)"/><circle cx="324.4" cy="163.8" r="2.4" fill="url(#g5)"/><circle cx="451.2" cy="376.5" r="2.8" fill="url(#g6)"/><circle cx="454.2" cy="363.0" r="2.6" fill="url(#g2)"/><circle cx="386.4" cy="236.8" r="2.6" fill="url(#g7)"/><circle cx="440.3" cy="252.6" r="2.9" fill="url(#g3)"/><circle cx="487.8" cy="156.4" r="3.0" fill="url(#g3)"/><circle cx="306.4" cy="322.9" r="2.6" fill="url(#g7)"/><circle cx="444.2" cy="265.1" r="2.3" fill="url(#g15)"/><circle cx="340.5" cy="158.6" r="2.7" fill="url(#g7)"/><circle cx="506.1" cy="306.1" r="2.3" fill="url(#g3)"/><circle cx="465.7" cy="205.3" r="2.3" fill="url(#g7)"/><circle cx="381.4" cy="370.7" r="3.1" fill="url(#g7)"/><circle cx="475.6" cy="333.8" r="3.4" fill="url(#g13)"/><circle cx="336.4" cy="288.2" r="3.1" fill="url(#g6)"/><circle cx="338.3" cy="103.1" r="2.7" fill="url(#g10)"/><circle cx="345.5" cy="101.8" r="2.7" fill="url(#g12)"/><circle cx="353.5" cy="99.9" r="2.7" fill="url(#g11)"/><circle cx="361.3" cy="97.9" r="2.7" fill="url(#g14)"/><circle cx="368.9" cy="96.5" r="2.7" fill="url(#g5)"/><circle cx="377.2" cy="95.1" r="2.7" fill="url(#g4)"/><circle cx="384.5" cy="92.7" r="2.7" fill="url(#g7)"/><circle cx="392.4" cy="91.6" r="2.7" fill="url(#g6)"/><circle cx="399.5" cy="89.8" r="2.7" fill="url(#g11)"/><circle cx="408.1" cy="88.4" r="2.7" fill="url(#g15)"/><circle cx="416.0" cy="85.8" r="2.7" fill="url(#g7)"/><circle cx="423.8" cy="84.2" r="2.7" fill="url(#g1)"/><circle cx="431.5" cy="82.8" r="2.7" fill="url(#g8)"/><circle cx="456.0" cy="80.0" r="2.9" fill="url(#g14)"/><circle cx="316.0" cy="108.0" r="2.6" fill="url(#g11)"/><circle cx="481.3" cy="104.4" r="2.7" fill="url(#g12)"/><circle cx="487.2" cy="110.7" r="2.7" fill="url(#g3)"/><circle cx="494.0" cy="118.0" r="2.7" fill="url(#g9)"/><circle cx="500.9" cy="124.8" r="2.7" fill="url(#g7)"/><circle cx="508.4" cy="132.3" r="2.7" fill="url(#g6)"/><circle cx="515.2" cy="138.9" r="2.7" fill="url(#g6)"/><circle cx="521.8" cy="146.1" r="2.7" fill="url(#g12)"/><circle cx="528.1" cy="153.2" r="2.7" fill="url(#g5)"/><circle cx="535.3" cy="160.6" r="2.7" fill="url(#g14)"/><circle cx="541.6" cy="167.4" r="2.7" fill="url(#g1)"/><circle cx="548.5" cy="174.8" r="2.7" fill="url(#g5)"/><circle cx="555.7" cy="181.9" r="2.7" fill="url(#g2)"/><circle cx="561.8" cy="189.1" r="2.7" fill="url(#g13)"/><circle cx="583.0" cy="213.0" r="2.9" fill="url(#g8)"/><circle cx="579.8" cy="245.8" r="2.7" fill="url(#g9)"/><circle cx="579.4" cy="254.4" r="2.7" fill="url(#g8)"/><circle cx="578.9" cy="262.4" r="2.7" fill="url(#g16)"/><circle cx="579.6" cy="269.6" r="2.7" fill="url(#g11)"/><circle cx="579.0" cy="278.0" r="2.7" fill="url(#g11)"/><circle cx="578.3" cy="285.9" r="2.7" fill="url(#g12)"/><circle cx="577.6" cy="293.4" r="2.7" fill="url(#g7)"/><circle cx="577.2" cy="302.2" r="2.7" fill="url(#g13)"/><circle cx="577.7" cy="309.8" r="2.7" fill="url(#g15)"/><circle cx="577.5" cy="317.5" r="2.7" fill="url(#g7)"/><circle cx="576.4" cy="325.5" r="2.7" fill="url(#g6)"/><circle cx="576.5" cy="333.7" r="2.7" fill="url(#g7)"/><circle cx="575.8" cy="341.9" r="2.7" fill="url(#g8)"/><circle cx="576.1" cy="349.7" r="2.7" fill="url(#g13)"/><circle cx="575.2" cy="357.5" r="2.7" fill="url(#g7)"/><circle cx="575.0" cy="365.8" r="2.7" fill="url(#g0)"/><circle cx="573.0" cy="394.0" r="2.9" fill="url(#g12)"/><circle cx="550.3" cy="407.5" r="2.7" fill="url(#g15)"/><circle cx="543.6" cy="411.0" r="2.7" fill="url(#g8)"/><circle cx="536.5" cy="414.8" r="2.7" fill="url(#g3)"/><circle cx="530.0" cy="418.5" r="2.7" fill="url(#g7)"/><circle cx="523.1" cy="422.6" r="2.7" fill="url(#g12)"/><circle cx="516.2" cy="426.1" r="2.7" fill="url(#g6)"/><circle cx="509.3" cy="428.9" r="2.7" fill="url(#g4)"/><circle cx="502.7" cy="433.4" r="2.7" fill="url(#g4)"/><circle cx="494.9" cy="436.8" r="2.7" fill="url(#g3)"/><circle cx="488.8" cy="440.2" r="2.7" fill="url(#g7)"/><circle cx="482.2" cy="443.6" r="2.7" fill="url(#g6)"/><circle cx="475.0" cy="447.8" r="2.7" fill="url(#g7)"/><circle cx="468.0" cy="450.4" r="2.7" fill="url(#g4)"/><circle cx="449.0" cy="461.0" r="2.9" fill="url(#g14)"/><circle cx="343.6" cy="404.5" r="2.7" fill="url(#g13)"/><circle cx="351.0" cy="407.8" r="2.7" fill="url(#g4)"/><circle cx="358.8" cy="412.5" r="2.7" fill="url(#g8)"/><circle cx="365.7" cy="415.6" r="2.7" fill="url(#g5)"/><circle cx="372.9" cy="420.0" r="2.7" fill="url(#g2)"/><circle cx="380.4" cy="424.3" r="2.7" fill="url(#g14)"/><circle cx="387.7" cy="427.8" r="2.7" fill="url(#g14)"/><circle cx="395.0" cy="431.9" r="2.7" fill="url(#g5)"/><circle cx="403.1" cy="435.7" r="2.7" fill="url(#g6)"/><circle cx="409.9" cy="439.9" r="2.7" fill="url(#g4)"/><circle cx="417.8" cy="444.4" r="2.7" fill="url(#g7)"/><circle cx="424.6" cy="448.2" r="2.7" fill="url(#g12)"/><circle cx="305.7" cy="135.6" r="2.7" fill="url(#g1)"/><circle cx="303.0" cy="145.9" r="2.7" fill="url(#g12)"/><circle cx="299.1" cy="155.8" r="2.7" fill="url(#g7)"/><circle cx="295.7" cy="164.7" r="2.7" fill="url(#g4)"/><circle cx="292.2" cy="174.8" r="2.7" fill="url(#g3)"/><circle cx="289.5" cy="183.6" r="2.7" fill="url(#g8)"/><circle cx="286.0" cy="194.0" r="2.7" fill="url(#g7)"/><circle cx="282.7" cy="203.3" r="2.7" fill="url(#g4)"/><circle cx="279.0" cy="212.5" r="2.7" fill="url(#g13)"/><circle cx="275.5" cy="222.3" r="2.7" fill="url(#g6)"/><circle cx="271.9" cy="232.4" r="2.7" fill="url(#g13)"/><circle cx="269.0" cy="241.9" r="2.7" fill="url(#g3)"/><circle cx="269.7" cy="261.9" r="2.7" fill="url(#g9)"/><circle cx="273.9" cy="271.0" r="2.7" fill="url(#g9)"/><circle cx="277.9" cy="280.8" r="2.7" fill="url(#g14)"/><circle cx="282.1" cy="289.9" r="2.7" fill="url(#g13)"/><circle cx="285.2" cy="299.5" r="2.7" fill="url(#g8)"/><circle cx="288.7" cy="308.6" r="2.7" fill="url(#g8)"/><circle cx="293.1" cy="317.6" r="2.7" fill="url(#g9)"/><circle cx="297.1" cy="326.9" r="2.7" fill="url(#g11)"/><circle cx="300.2" cy="335.7" r="2.7" fill="url(#g13)"/><circle cx="304.4" cy="345.1" r="2.7" fill="url(#g14)"/><circle cx="308.1" cy="354.8" r="2.7" fill="url(#g14)"/><circle cx="312.6" cy="363.1" r="2.7" fill="url(#g8)"/><circle cx="315.7" cy="372.7" r="2.7" fill="url(#g3)"/><circle cx="320.4" cy="382.1" r="2.7" fill="url(#g16)"/><circle cx="325.3" cy="130.4" r="2.7" fill="url(#g7)"/><circle cx="334.3" cy="128.0" r="2.7" fill="url(#g14)"/><circle cx="343.1" cy="126.1" r="2.7" fill="url(#g7)"/><circle cx="352.0" cy="124.9" r="2.7" fill="url(#g5)"/><circle cx="361.9" cy="123.4" r="2.7" fill="url(#g5)"/><circle cx="370.9" cy="120.7" r="2.7" fill="url(#g7)"/><circle cx="379.9" cy="119.7" r="2.7" fill="url(#g10)"/><circle cx="388.5" cy="117.7" r="2.7" fill="url(#g1)"/><circle cx="398.0" cy="115.4" r="2.7" fill="url(#g9)"/><circle cx="407.6" cy="113.7" r="2.7" fill="url(#g0)"/><circle cx="417.0" cy="111.7" r="2.7" fill="url(#g1)"/><circle cx="425.3" cy="110.9" r="2.7" fill="url(#g9)"/><circle cx="434.9" cy="108.6" r="2.7" fill="url(#g1)"/><circle cx="444.0" cy="107.2" r="2.7" fill="url(#g13)"/><circle cx="455.6" cy="111.2" r="2.7" fill="url(#g4)"/><circle cx="462.3" cy="119.2" r="2.7" fill="url(#g3)"/><circle cx="469.4" cy="127.0" r="2.7" fill="url(#g8)"/><circle cx="476.2" cy="134.9" r="2.7" fill="url(#g1)"/><circle cx="482.3" cy="143.8" r="2.7" fill="url(#g6)"/><circle cx="489.6" cy="151.1" r="2.7" fill="url(#g13)"/><circle cx="495.9" cy="159.8" r="2.7" fill="url(#g10)"/><circle cx="502.6" cy="167.7" r="2.7" fill="url(#g6)"/><circle cx="509.6" cy="175.3" r="2.7" fill="url(#g11)"/><circle cx="515.9" cy="183.1" r="2.7" fill="url(#g9)"/><circle cx="522.6" cy="191.9" r="2.7" fill="url(#g11)"/><circle cx="529.7" cy="200.2" r="2.7" fill="url(#g4)"/><circle cx="536.6" cy="207.8" r="2.7" fill="url(#g14)"/><circle cx="542.9" cy="215.6" r="2.7" fill="url(#g14)"/><circle cx="549.5" cy="223.9" r="2.7" fill="url(#g3)"/><circle cx="556.6" cy="232.0" r="2.7" fill="url(#g5)"/><circle cx="555.4" cy="239.5" r="2.7" fill="url(#g5)"/><circle cx="556.1" cy="249.9" r="2.7" fill="url(#g11)"/><circle cx="555.2" cy="260.0" r="2.7" fill="url(#g8)"/><circle cx="555.4" cy="269.5" r="2.7" fill="url(#g12)"/><circle cx="554.0" cy="279.5" r="2.7" fill="url(#g16)"/><circle cx="554.6" cy="289.3" r="2.7" fill="url(#g16)"/><circle cx="553.3" cy="298.6" r="2.7" fill="url(#g7)"/><circle cx="553.8" cy="308.4" r="2.7" fill="url(#g7)"/><circle cx="552.6" cy="318.5" r="2.7" fill="url(#g11)"/><circle cx="552.2" cy="328.4" r="2.7" fill="url(#g7)"/><circle cx="551.9" cy="337.2" r="2.7" fill="url(#g5)"/><circle cx="551.7" cy="348.0" r="2.7" fill="url(#g4)"/><circle cx="551.3" cy="357.4" r="2.7" fill="url(#g7)"/><circle cx="551.2" cy="366.6" r="2.7" fill="url(#g5)"/><circle cx="545.8" cy="372.9" r="2.7" fill="url(#g5)"/><circle cx="537.7" cy="378.5" r="2.7" fill="url(#g7)"/><circle cx="528.4" cy="383.4" r="2.7" fill="url(#g14)"/><circle cx="520.2" cy="387.6" r="2.7" fill="url(#g10)"/><circle cx="511.0" cy="392.8" r="2.7" fill="url(#g14)"/><circle cx="503.3" cy="397.5" r="2.7" fill="url(#g4)"/><circle cx="494.7" cy="402.1" r="2.7" fill="url(#g14)"/><circle cx="485.4" cy="407.3" r="2.7" fill="url(#g8)"/><circle cx="477.2" cy="412.5" r="2.7" fill="url(#g6)"/><circle cx="468.7" cy="416.9" r="2.7" fill="url(#g7)"/><circle cx="460.4" cy="421.4" r="2.7" fill="url(#g8)"/><circle cx="453.7" cy="426.8" r="2.7" fill="url(#g12)"/><circle cx="445.8" cy="433.1" r="2.7" fill="url(#g8)"/><circle cx="436.8" cy="439.4" r="2.7" fill="url(#g15)"/><circle cx="428.3" cy="445.3" r="2.7" fill="url(#g12)"/></svg>
</body></html>
